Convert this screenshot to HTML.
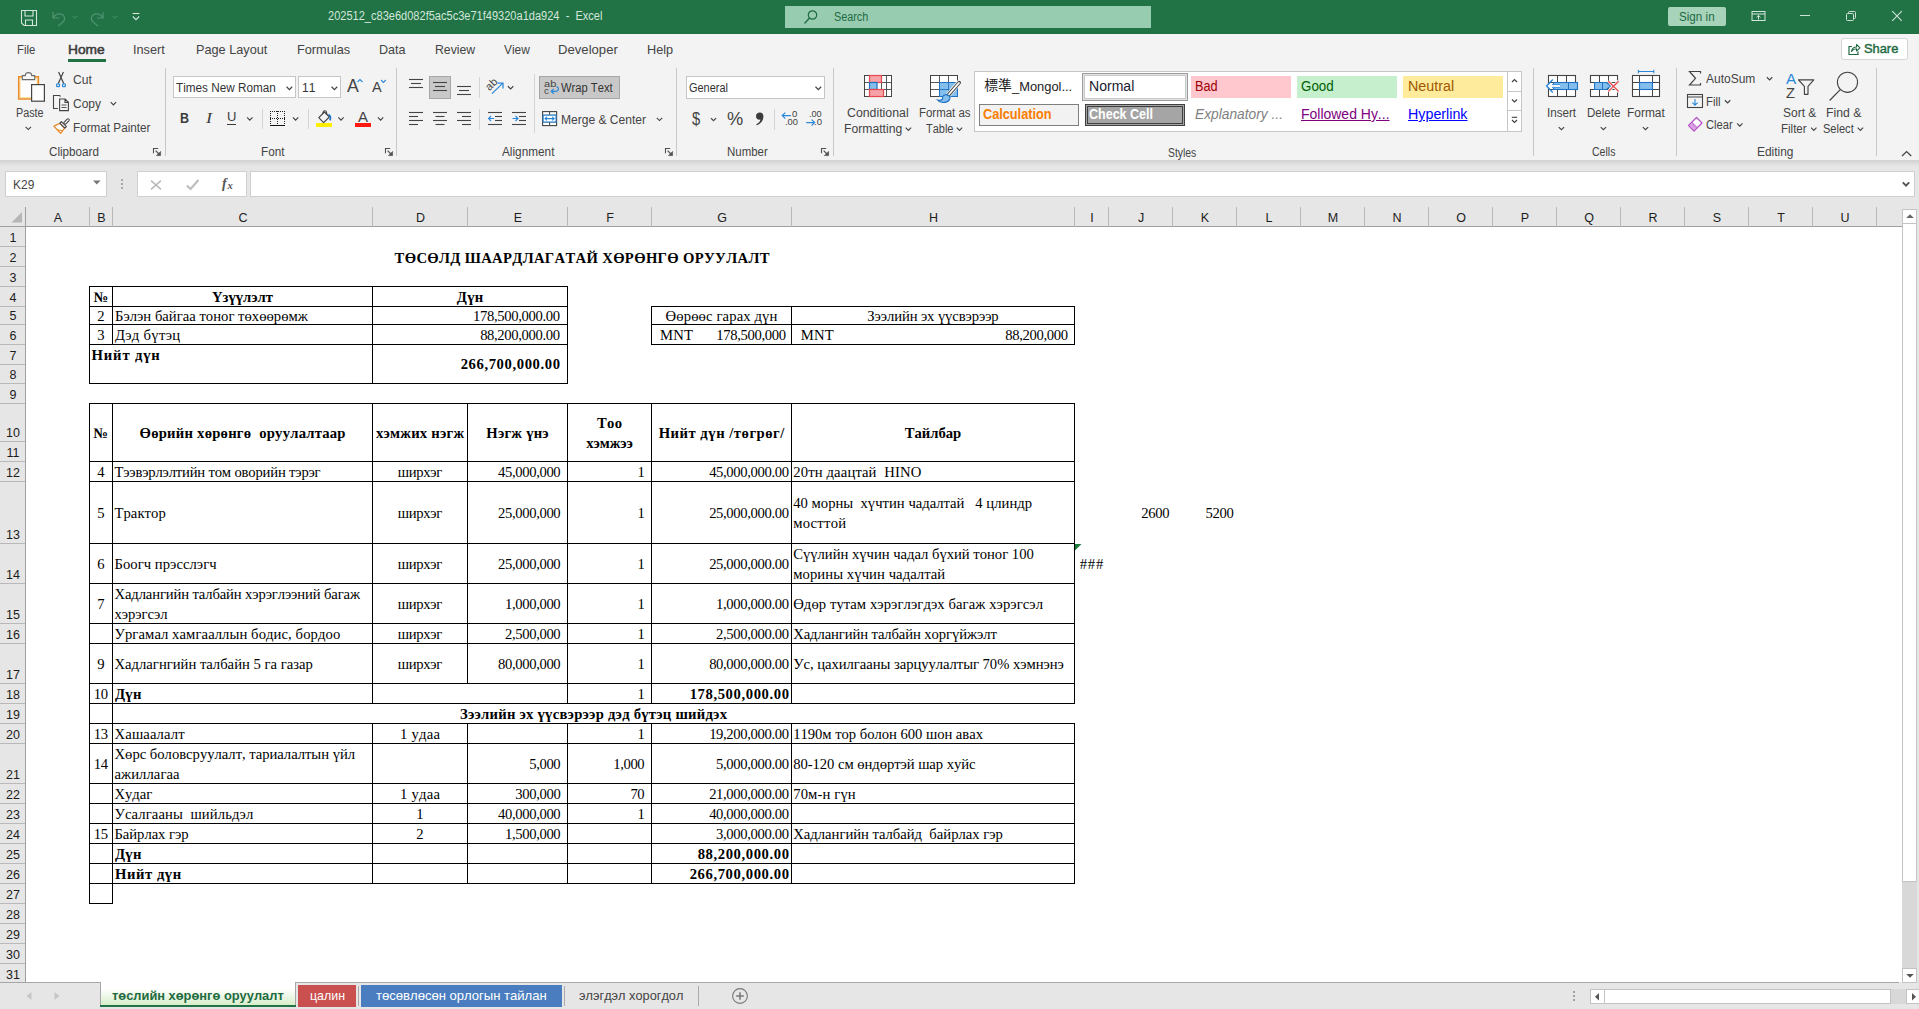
<!DOCTYPE html>
<html lang="mn"><head><meta charset="utf-8"><title>Excel</title>
<style>
html,body{margin:0;padding:0;background:#fff;}
body{width:1919px;height:1009px;overflow:hidden;}
#app{position:relative;width:1919px;height:1009px;overflow:hidden;background:#fff;font-family:"Liberation Sans",sans-serif;font-size:12px;color:#444;}
#app div,#app span,#app svg{position:absolute;box-sizing:border-box;}
#app .c{display:flex;font-kerning:none;font-family:"Liberation Serif",serif;font-size:14.67px;line-height:20px;color:#000;overflow:visible;}
#app .c span{position:static;display:block;}
#app .b{pointer-events:none;}
#app .t{white-space:pre;line-height:1;}
#app .ch{font-family:"Liberation Sans",sans-serif;font-size:12.5px;color:#1c1c1c;text-align:center;line-height:20px;white-space:pre;}
#app .rh{font-family:"Liberation Sans",sans-serif;font-size:12.5px;color:#1c1c1c;text-align:center;line-height:20px;white-space:pre;}

</style></head>
<body>
<div id="app">
<div style="left:0px;top:0px;width:1919px;height:34px;background:#217346;"></div>
<svg style="left:20px;top:9px;" width="18" height="18" viewBox="0 0 18 18"><path d="M1.5 1.5 H16.5 V16.5 H4 L1.5 14 Z M5 1.5 V7 H13 V1.5 M5.5 16.5 V11 H12.5 V16.5" fill="none" stroke="#d4e6dc" stroke-width="1.1"/></svg>
<svg style="left:50px;top:9px;" width="18" height="18" viewBox="0 0 18 18"><path d="M3 3 V9 H9 M3 9 C6 3.5 13 3.5 14.5 8.5 C15.5 12 12 14 8 17" fill="none" stroke="#4f9370" stroke-width="1.2"/></svg>
<svg style="left:70px;top:12px;" width="10" height="10" viewBox="0 0 10 10"><path d="M2.5 3.75 L5 6.25 L7.5 3.75" fill="none" stroke="#4f9370" stroke-width="1"/></svg>
<svg style="left:88px;top:9px;" width="18" height="18" viewBox="0 0 18 18"><path d="M15 3 V9 H9 M15 9 C12 3.5 5 3.5 3.5 8.5 C2.5 12 6 14 10 17" fill="none" stroke="#4f9370" stroke-width="1.2"/></svg>
<svg style="left:109.5px;top:12px;" width="10" height="10" viewBox="0 0 10 10"><path d="M2.5 3.75 L5 6.25 L7.5 3.75" fill="none" stroke="#4f9370" stroke-width="1"/></svg>
<svg style="left:130px;top:11px;" width="12" height="12" viewBox="0 0 12 12"><path d="M2.5 2.5 H9.5" stroke="#d4e6dc" stroke-width="1.1"/><path d="M2.8 5.5 L6 8.7 L9.2 5.5" fill="none" stroke="#d4e6dc" stroke-width="1.1"/></svg>
<div class="t" style="top:5.70px;height:20px;line-height:20px;font-size:12px;color:#d3e6da;font-kerning:none;transform:scaleX(0.9202);transform-origin:0 50%;left:327.60px;">202512_c83e6d082f5ac5c3e71f49320a1da924  -  Excel</div>
<div style="left:785px;top:6px;width:366px;height:22px;background:#98ccb1;"></div>
<svg style="left:802.4px;top:8px;" width="18" height="18" viewBox="0 0 18 18"><circle cx="10.5" cy="7" r="4.2" fill="none" stroke="#1f6b43" stroke-width="1.2"/><path d="M7.5 10 L2.5 15.5" stroke="#1f6b43" stroke-width="1.3"/></svg>
<div class="t" style="top:6.80px;height:20px;line-height:20px;font-size:12.5px;color:#1f6b43;font-kerning:none;transform:scaleX(0.8662);transform-origin:0 50%;left:834.20px;">Search</div>
<div style="left:1668px;top:7px;width:58px;height:19px;background:#a6d3ba;border-radius:2px;"></div>
<div class="t" style="top:6.60px;height:20px;line-height:20px;font-size:12.5px;color:#1f6b43;font-kerning:none;transform:scaleX(0.9316);transform-origin:0 50%;left:1679.00px;">Sign in</div>
<svg style="left:1751px;top:10px;" width="16" height="12" viewBox="0 0 16 12"><rect x="1" y="1.5" width="13" height="9" fill="none" stroke="#d4e6dc" stroke-width="1"/><path d="M1 4 H14" stroke="#d4e6dc" stroke-width="1"/><path d="M7.5 9.5 V5.5 M5.5 7.3 L7.5 5.4 L9.5 7.3" fill="none" stroke="#d4e6dc" stroke-width="1"/></svg>
<div style="left:1800px;top:15px;width:10px;height:1px;background:#cfe3d8;"></div>
<svg style="left:1845px;top:10px;" width="12" height="12" viewBox="0 0 12 12"><rect x="1.5" y="3.5" width="7" height="7" fill="none" stroke="#cfe3d8" stroke-width="1" rx="1"/><path d="M3.5 3.5 V2.5 Q3.5 1.5 4.5 1.5 H9.5 Q10.5 1.5 10.5 2.5 V7.5 Q10.5 8.5 9.5 8.5 H8.5" fill="none" stroke="#cfe3d8" stroke-width="1"/></svg>
<svg style="left:1891px;top:10px;" width="12" height="12" viewBox="0 0 12 12"><path d="M1.2 1.2 L10.8 10.8 M10.8 1.2 L1.2 10.8" stroke="#cfe3d8" stroke-width="1.1"/></svg>
<div style="left:0px;top:34px;width:1919px;height:126px;background:#f3f3f3;"></div>
<div class="t" style="top:39.60px;height:20px;line-height:20px;font-size:13px;color:#444;font-kerning:none;transform:scaleX(0.8738);transform-origin:0 50%;left:17.30px;">File</div>
<div class="t" style="top:39.60px;height:20px;line-height:20px;font-size:13px;color:#3a3a3a;font-kerning:none;transform:scaleX(1.0585);transform-origin:0 50%;left:68.30px;-webkit-text-stroke:0.5px #3a3a3a;">Home</div>
<div style="left:68px;top:59px;width:38px;height:3px;background:#217346;"></div>
<div class="t" style="top:39.60px;height:20px;line-height:20px;font-size:13px;color:#444;font-kerning:none;transform:scaleX(0.9781);transform-origin:0 50%;left:133.20px;">Insert</div>
<div class="t" style="top:39.60px;height:20px;line-height:20px;font-size:13px;color:#444;font-kerning:none;transform:scaleX(0.9768);transform-origin:0 50%;left:196.00px;">Page Layout</div>
<div class="t" style="top:39.60px;height:20px;line-height:20px;font-size:13px;color:#444;font-kerning:none;transform:scaleX(0.9802);transform-origin:0 50%;left:297.20px;">Formulas</div>
<div class="t" style="top:39.60px;height:20px;line-height:20px;font-size:13px;color:#444;font-kerning:none;transform:scaleX(0.9688);transform-origin:0 50%;left:379.40px;">Data</div>
<div class="t" style="top:39.60px;height:20px;line-height:20px;font-size:13px;color:#444;font-kerning:none;transform:scaleX(0.9410);transform-origin:0 50%;left:435.20px;">Review</div>
<div class="t" style="top:39.60px;height:20px;line-height:20px;font-size:13px;color:#444;font-kerning:none;transform:scaleX(0.9160);transform-origin:0 50%;left:503.50px;">View</div>
<div class="t" style="top:39.60px;height:20px;line-height:20px;font-size:13px;color:#444;font-kerning:none;transform:scaleX(1.0094);transform-origin:0 50%;left:558.20px;">Developer</div>
<div class="t" style="top:39.60px;height:20px;line-height:20px;font-size:13px;color:#444;font-kerning:none;transform:scaleX(0.9765);transform-origin:0 50%;left:646.50px;">Help</div>
<div style="left:1841px;top:38px;width:67px;height:22px;background:#fff;border:1px solid #d6d6d6;border-radius:3px;"></div>
<svg style="left:1847px;top:42px;" width="14" height="14" viewBox="0 0 14 14"><path d="M5 4.5 H2 V12.5 H11 V9.5" fill="none" stroke="#1f6b43" stroke-width="1.2"/><path d="M4.5 9.5 C5 6.5 7 5 9.5 5 V2.5 L13 5.8 L9.5 9 V6.8 C7.5 6.8 6 7.5 4.5 9.5 Z" fill="none" stroke="#1f6b43" stroke-width="1.1" stroke-linejoin="round"/></svg>
<div class="t" style="top:39.20px;height:20px;line-height:20px;font-size:13px;color:#1f6b43;font-kerning:none;transform:scaleX(0.9889);transform-origin:0 50%;left:1864.00px;-webkit-text-stroke:0.45px #1f6b43;">Share</div>
<div style="left:0px;top:160px;width:1919px;height:849px;background:#e6e6e6;"></div>
<div style="left:0;top:160px;width:1919px;height:6px;background:linear-gradient(#d2d2d2,#e6e6e6);"></div>
<div style="left:5px;top:171px;width:102px;height:26px;background:#fff;border:1px solid #cfcfcf;"></div>
<div class="t" style="top:174.60px;height:20px;line-height:20px;font-size:12.5px;color:#444;font-kerning:none;transform:scaleX(0.9578);transform-origin:0 50%;left:12.70px;">K29</div>
<svg style="left:92px;top:179px;" width="10" height="8" viewBox="0 0 10 8"><path d="M1 1.5 H8.6 L4.8 5.6 Z" fill="#777"/></svg>
<div style="left:121px;top:179.3px;width:2px;height:2px;background:#a8a8a8;"></div>
<div style="left:121px;top:183px;width:2px;height:2px;background:#a8a8a8;"></div>
<div style="left:121px;top:186.7px;width:2px;height:2px;background:#a8a8a8;"></div>
<div style="left:137px;top:171px;width:110px;height:26px;background:#fff;border:1px solid #cfcfcf;"></div>
<svg style="left:149px;top:178px;" width="14" height="14" viewBox="0 0 14 14"><path d="M2 2.6 L12 11.4 M12 2.6 L2 11.4" stroke="#b9b9b9" stroke-width="1.5"/></svg>
<svg style="left:185px;top:178px;" width="15" height="14" viewBox="0 0 15 14"><path d="M1.8 7.5 L5.6 11 L13.4 2" fill="none" stroke="#bdbdbd" stroke-width="2.1"/></svg>
<div class="t" style="top:174.20px;height:20px;line-height:20px;font-size:14px;color:#555;font-kerning:none;font-family:'Liberation Serif',serif;font-style:italic;left:222.00px;font-weight:bold;">f</div>
<div class="t" style="top:176.00px;height:20px;line-height:20px;font-size:10.5px;color:#555;font-kerning:none;font-family:'Liberation Serif',serif;font-style:italic;left:227.50px;font-weight:bold;">x</div>
<div style="left:250px;top:171px;width:1665px;height:26px;background:#fff;border:1px solid #cfcfcf;"></div>
<svg style="left:1901.3px;top:178.6px;" width="10" height="10" viewBox="0 0 10 10"><path d="M1.7999999999999998 3.3 L5 6.7 L8.2 3.3" fill="none" stroke="#555" stroke-width="1.9"/></svg>
<div style="left:26px;top:227px;width:1876px;height:755px;background:#fff;"></div>
<div style="left:0px;top:226px;width:1902px;height:1px;background:#9f9f9f;"></div>
<div style="left:25px;top:207px;width:1px;height:775px;background:#9f9f9f;"></div>
<svg style="left:10px;top:211px;" width="13" height="13" viewBox="0 0 13 13"><path d="M12 1 V11.5 H1.5 Z" fill="#b6b6b6"/></svg>
<div style="left:89px;top:207px;width:1px;height:20px;background:#b9b9b9;"></div>
<div class="ch" style="left:26.5px;top:208px;width:63px;height:20px;">A</div>
<div style="left:112px;top:207px;width:1px;height:20px;background:#b9b9b9;"></div>
<div class="ch" style="left:90.5px;top:208px;width:22px;height:20px;">B</div>
<div style="left:372px;top:207px;width:1px;height:20px;background:#b9b9b9;"></div>
<div class="ch" style="left:113.5px;top:208px;width:259px;height:20px;">C</div>
<div style="left:467px;top:207px;width:1px;height:20px;background:#b9b9b9;"></div>
<div class="ch" style="left:373.5px;top:208px;width:94px;height:20px;">D</div>
<div style="left:567px;top:207px;width:1px;height:20px;background:#b9b9b9;"></div>
<div class="ch" style="left:468.5px;top:208px;width:99px;height:20px;">E</div>
<div style="left:651px;top:207px;width:1px;height:20px;background:#b9b9b9;"></div>
<div class="ch" style="left:568.5px;top:208px;width:83px;height:20px;">F</div>
<div style="left:791px;top:207px;width:1px;height:20px;background:#b9b9b9;"></div>
<div class="ch" style="left:652.5px;top:208px;width:139px;height:20px;">G</div>
<div style="left:1074px;top:207px;width:1px;height:20px;background:#b9b9b9;"></div>
<div class="ch" style="left:792.5px;top:208px;width:282px;height:20px;">H</div>
<div style="left:1108px;top:207px;width:1px;height:20px;background:#b9b9b9;"></div>
<div class="ch" style="left:1075.5px;top:208px;width:33px;height:20px;">I</div>
<div style="left:1172px;top:207px;width:1px;height:20px;background:#b9b9b9;"></div>
<div class="ch" style="left:1109.5px;top:208px;width:63px;height:20px;">J</div>
<div style="left:1236px;top:207px;width:1px;height:20px;background:#b9b9b9;"></div>
<div class="ch" style="left:1173.5px;top:208px;width:63px;height:20px;">K</div>
<div style="left:1300px;top:207px;width:1px;height:20px;background:#b9b9b9;"></div>
<div class="ch" style="left:1237.5px;top:208px;width:63px;height:20px;">L</div>
<div style="left:1364px;top:207px;width:1px;height:20px;background:#b9b9b9;"></div>
<div class="ch" style="left:1301.5px;top:208px;width:63px;height:20px;">M</div>
<div style="left:1428px;top:207px;width:1px;height:20px;background:#b9b9b9;"></div>
<div class="ch" style="left:1365.5px;top:208px;width:63px;height:20px;">N</div>
<div style="left:1492px;top:207px;width:1px;height:20px;background:#b9b9b9;"></div>
<div class="ch" style="left:1429.5px;top:208px;width:63px;height:20px;">O</div>
<div style="left:1556px;top:207px;width:1px;height:20px;background:#b9b9b9;"></div>
<div class="ch" style="left:1493.5px;top:208px;width:63px;height:20px;">P</div>
<div style="left:1620px;top:207px;width:1px;height:20px;background:#b9b9b9;"></div>
<div class="ch" style="left:1557.5px;top:208px;width:63px;height:20px;">Q</div>
<div style="left:1684px;top:207px;width:1px;height:20px;background:#b9b9b9;"></div>
<div class="ch" style="left:1621.5px;top:208px;width:63px;height:20px;">R</div>
<div style="left:1748px;top:207px;width:1px;height:20px;background:#b9b9b9;"></div>
<div class="ch" style="left:1685.5px;top:208px;width:63px;height:20px;">S</div>
<div style="left:1812px;top:207px;width:1px;height:20px;background:#b9b9b9;"></div>
<div class="ch" style="left:1749.5px;top:208px;width:63px;height:20px;">T</div>
<div style="left:1876px;top:207px;width:1px;height:20px;background:#b9b9b9;"></div>
<div class="ch" style="left:1813.5px;top:208px;width:63px;height:20px;">U</div>
<div style="left:0px;top:246px;width:25px;height:1px;background:#b9b9b9;"></div>
<div class="rh" style="left:0;top:228px;width:26px;height:20px;">1</div>
<div style="left:0px;top:266px;width:25px;height:1px;background:#b9b9b9;"></div>
<div class="rh" style="left:0;top:248px;width:26px;height:20px;">2</div>
<div style="left:0px;top:286px;width:25px;height:1px;background:#b9b9b9;"></div>
<div class="rh" style="left:0;top:268px;width:26px;height:20px;">3</div>
<div style="left:0px;top:306px;width:25px;height:1px;background:#b9b9b9;"></div>
<div class="rh" style="left:0;top:288px;width:26px;height:20px;">4</div>
<div style="left:0px;top:324px;width:25px;height:1px;background:#b9b9b9;"></div>
<div class="rh" style="left:0;top:306px;width:26px;height:20px;">5</div>
<div style="left:0px;top:344px;width:25px;height:1px;background:#b9b9b9;"></div>
<div class="rh" style="left:0;top:326px;width:26px;height:20px;">6</div>
<div style="left:0px;top:364px;width:25px;height:1px;background:#b9b9b9;"></div>
<div class="rh" style="left:0;top:346px;width:26px;height:20px;">7</div>
<div style="left:0px;top:383px;width:25px;height:1px;background:#b9b9b9;"></div>
<div class="rh" style="left:0;top:365px;width:26px;height:20px;">8</div>
<div style="left:0px;top:403px;width:25px;height:1px;background:#b9b9b9;"></div>
<div class="rh" style="left:0;top:385px;width:26px;height:20px;">9</div>
<div style="left:0px;top:441px;width:25px;height:1px;background:#b9b9b9;"></div>
<div class="rh" style="left:0;top:423px;width:26px;height:20px;">10</div>
<div style="left:0px;top:461px;width:25px;height:1px;background:#b9b9b9;"></div>
<div class="rh" style="left:0;top:443px;width:26px;height:20px;">11</div>
<div style="left:0px;top:481px;width:25px;height:1px;background:#b9b9b9;"></div>
<div class="rh" style="left:0;top:463px;width:26px;height:20px;">12</div>
<div style="left:0px;top:543px;width:25px;height:1px;background:#b9b9b9;"></div>
<div class="rh" style="left:0;top:525px;width:26px;height:20px;">13</div>
<div style="left:0px;top:583px;width:25px;height:1px;background:#b9b9b9;"></div>
<div class="rh" style="left:0;top:565px;width:26px;height:20px;">14</div>
<div style="left:0px;top:623px;width:25px;height:1px;background:#b9b9b9;"></div>
<div class="rh" style="left:0;top:605px;width:26px;height:20px;">15</div>
<div style="left:0px;top:643px;width:25px;height:1px;background:#b9b9b9;"></div>
<div class="rh" style="left:0;top:625px;width:26px;height:20px;">16</div>
<div style="left:0px;top:683px;width:25px;height:1px;background:#b9b9b9;"></div>
<div class="rh" style="left:0;top:665px;width:26px;height:20px;">17</div>
<div style="left:0px;top:703px;width:25px;height:1px;background:#b9b9b9;"></div>
<div class="rh" style="left:0;top:685px;width:26px;height:20px;">18</div>
<div style="left:0px;top:723px;width:25px;height:1px;background:#b9b9b9;"></div>
<div class="rh" style="left:0;top:705px;width:26px;height:20px;">19</div>
<div style="left:0px;top:743px;width:25px;height:1px;background:#b9b9b9;"></div>
<div class="rh" style="left:0;top:725px;width:26px;height:20px;">20</div>
<div style="left:0px;top:783px;width:25px;height:1px;background:#b9b9b9;"></div>
<div class="rh" style="left:0;top:765px;width:26px;height:20px;">21</div>
<div style="left:0px;top:803px;width:25px;height:1px;background:#b9b9b9;"></div>
<div class="rh" style="left:0;top:785px;width:26px;height:20px;">22</div>
<div style="left:0px;top:823px;width:25px;height:1px;background:#b9b9b9;"></div>
<div class="rh" style="left:0;top:805px;width:26px;height:20px;">23</div>
<div style="left:0px;top:843px;width:25px;height:1px;background:#b9b9b9;"></div>
<div class="rh" style="left:0;top:825px;width:26px;height:20px;">24</div>
<div style="left:0px;top:863px;width:25px;height:1px;background:#b9b9b9;"></div>
<div class="rh" style="left:0;top:845px;width:26px;height:20px;">25</div>
<div style="left:0px;top:883px;width:25px;height:1px;background:#b9b9b9;"></div>
<div class="rh" style="left:0;top:865px;width:26px;height:20px;">26</div>
<div style="left:0px;top:903px;width:25px;height:1px;background:#b9b9b9;"></div>
<div class="rh" style="left:0;top:885px;width:26px;height:20px;">27</div>
<div style="left:0px;top:923px;width:25px;height:1px;background:#b9b9b9;"></div>
<div class="rh" style="left:0;top:905px;width:26px;height:20px;">28</div>
<div style="left:0px;top:943px;width:25px;height:1px;background:#b9b9b9;"></div>
<div class="rh" style="left:0;top:925px;width:26px;height:20px;">29</div>
<div style="left:0px;top:963px;width:25px;height:1px;background:#b9b9b9;"></div>
<div class="rh" style="left:0;top:945px;width:26px;height:20px;">30</div>
<div class="rh" style="left:0;top:965px;width:26px;height:20px;">31</div>
<div style="left:1902px;top:207px;width:17px;height:775px;background:#e6e6e6;"></div>
<div style="left:1902px;top:223px;width:15px;height:659px;background:#fff;border:1px solid #c3c3c3;"></div>
<div style="left:1902px;top:882px;width:15px;height:86px;background:#d8d8d8;"></div>
<div style="left:1902px;top:209px;width:15px;height:15px;background:#fff;border:1px solid #c3c3c3;"></div>
<svg style="left:1904.5px;top:212px;" width="10" height="8" viewBox="0 0 10 8"><path d="M1.2 6 L5 2.2 L8.8 6 Z" fill="#666"/></svg>
<div style="left:0px;top:982px;width:1919px;height:27px;background:#e6e6e6;"></div>
<div style="left:0px;top:982px;width:1899px;height:1px;background:#a6a6a6;"></div>
<svg style="left:25px;top:991px;" width="8" height="10" viewBox="0 0 8 10"><path d="M6.5 1 L1.5 5 L6.5 9 Z" fill="#c6c6c6"/></svg>
<svg style="left:53px;top:991px;" width="8" height="10" viewBox="0 0 8 10"><path d="M1.5 1 L6.5 5 L1.5 9 Z" fill="#c6c6c6"/></svg>
<div style="left:100px;top:982px;width:196px;height:25px;background:linear-gradient(#ffffff 25%,#d3ecc4 100%);border-left:1px solid #a6a6a6;border-right:1px solid #a6a6a6;"></div>
<div style="left:100px;top:1005px;width:196px;height:2px;background:#217346;"></div>
<div class="t" style="top:985.60px;height:20px;line-height:20px;font-size:13px;color:#1e6b41;font-kerning:none;font-weight:bold;transform:scaleX(0.9891);transform-origin:0 50%;left:111.80px;">төслийн хөрөнгө оруулалт</div>
<div style="left:298px;top:985px;width:58px;height:22px;background:#c9504e;"></div>
<div class="t" style="top:985.60px;height:20px;line-height:20px;font-size:13px;color:#fff;font-kerning:none;transform:scaleX(0.9534);transform-origin:0 50%;left:309.60px;">цалин</div>
<div style="left:358px;top:986px;width:1px;height:20px;background:#ababab;"></div>
<div style="left:361px;top:985px;width:201px;height:22px;background:#4a7dc0;"></div>
<div class="t" style="top:985.60px;height:20px;line-height:20px;font-size:13px;color:#fff;font-kerning:none;transform:scaleX(1.0056);transform-origin:0 50%;left:375.80px;">төсөвлөсөн орлогын тайлан</div>
<div style="left:564px;top:986px;width:1px;height:20px;background:#ababab;"></div>
<div class="t" style="top:985.60px;height:20px;line-height:20px;font-size:13px;color:#444;font-kerning:none;transform:scaleX(0.9818);transform-origin:0 50%;left:579.40px;">элэгдэл хорогдол</div>
<div style="left:698px;top:986px;width:1px;height:20px;background:#ababab;"></div>
<svg style="left:731px;top:987px;" width="18" height="18" viewBox="0 0 18 18"><circle cx="9" cy="9" r="7.4" fill="none" stroke="#777" stroke-width="1.1"/><path d="M9 5.2 V12.8 M5.2 9 H12.8" stroke="#777" stroke-width="1.5"/></svg>
<div style="left:1573px;top:991px;width:1.6px;height:1.6px;background:#a0a0a0;"></div>
<div style="left:1573px;top:995px;width:1.6px;height:1.6px;background:#a0a0a0;"></div>
<div style="left:1573px;top:999px;width:1.6px;height:1.6px;background:#a0a0a0;"></div>
<div style="left:1590px;top:989px;width:15px;height:15px;background:#fff;border:1px solid #c3c3c3;"></div>
<svg style="left:1593px;top:992px;" width="8" height="10" viewBox="0 0 8 10"><path d="M6 1 L2 4.8 L6 8.6 Z" fill="#555"/></svg>
<div style="left:1604px;top:989px;width:287px;height:15px;background:#fff;border:1px solid #c3c3c3;"></div>
<div style="left:1906px;top:989px;width:15px;height:15px;background:#fff;border:1px solid #c3c3c3;"></div>
<svg style="left:1910px;top:992px;" width="8" height="10" viewBox="0 0 8 10"><path d="M2 1 L6 4.8 L2 8.6 Z" fill="#555"/></svg>
<div style="left:1891px;top:989px;width:15px;height:15px;background:#d8d8d8;"></div>
<div style="left:1902px;top:968px;width:15px;height:15px;background:#fff;border:1px solid #c3c3c3;"></div>
<svg style="left:1904.5px;top:972px;" width="10" height="8" viewBox="0 0 10 8"><path d="M1.2 2 L5 5.8 L8.8 2 Z" fill="#555"/></svg>
<div class="t" style="top:103.00px;height:20px;line-height:20px;font-size:12px;color:#444;font-kerning:none;transform:scaleX(0.8995);transform-origin:0 50%;left:15.60px;">Paste</div>
<div class="t" style="top:69.60px;height:20px;line-height:20px;font-size:12px;color:#444;font-kerning:none;transform:scaleX(1.0069);transform-origin:0 50%;left:72.50px;">Cut</div>
<div class="t" style="top:94.20px;height:20px;line-height:20px;font-size:12px;color:#444;font-kerning:none;transform:scaleX(0.9961);transform-origin:0 50%;left:72.50px;">Copy</div>
<div class="t" style="top:118.00px;height:20px;line-height:20px;font-size:12px;color:#444;font-kerning:none;transform:scaleX(0.9766);transform-origin:0 50%;left:72.50px;">Format Painter</div>
<div class="t" style="top:142.30px;height:20px;line-height:20px;font-size:12px;color:#444;font-kerning:none;transform:scaleX(0.9718);transform-origin:0 50%;left:48.70px;">Clipboard</div>
<div style="left:164.5px;top:68px;width:1px;height:88px;background:#c8c8c8;"></div>
<div style="left:173px;top:76px;width:123px;height:22px;background:#fff;border:1px solid #c6c6c6;"></div>
<div class="t" style="top:77.80px;height:20px;line-height:20px;font-size:12px;color:#333;font-kerning:none;transform:scaleX(0.9774);transform-origin:0 50%;left:176.30px;">Times New Roman</div>
<div style="left:298px;top:76px;width:43px;height:22px;background:#fff;border:1px solid #c6c6c6;"></div>
<div class="t" style="top:77.80px;height:20px;line-height:20px;font-size:12px;color:#333;font-kerning:none;transform:scaleX(0.9977);transform-origin:0 50%;left:302.00px;">11</div>
<div class="t" style="top:76.20px;height:20px;line-height:20px;font-size:17.5px;color:#444;font-kerning:none;transform:scaleX(1.0109);transform-origin:0 50%;left:346.80px;">A</div>
<div class="t" style="top:77.30px;height:20px;line-height:20px;font-size:14.5px;color:#444;font-kerning:none;transform:scaleX(1.0029);transform-origin:0 50%;left:372.30px;">A</div>
<div class="t" style="top:107.60px;height:20px;line-height:20px;font-size:14px;color:#3b3b3b;font-kerning:none;font-weight:bold;transform:scaleX(0.8904);transform-origin:0 50%;left:180.30px;">B</div>
<div class="t" style="top:107.60px;height:20px;line-height:20px;font-size:14.5px;color:#3b3b3b;font-kerning:none;font-family:'Liberation Serif',serif;font-style:italic;transform:scaleX(1.2426);transform-origin:0 50%;left:205.50px;">I</div>
<div class="t" style="top:107.40px;height:20px;line-height:20px;font-size:13.5px;color:#3b3b3b;font-kerning:none;transform:scaleX(0.9644);transform-origin:0 50%;left:227.00px;">U</div>
<div style="left:227px;top:123.6px;width:9.4px;height:1.1px;background:#3b3b3b;"></div>
<div style="left:262px;top:109px;width:1px;height:20px;background:#d4d4d4;"></div>
<div style="left:308px;top:109px;width:1px;height:20px;background:#d4d4d4;"></div>
<div style="left:316px;top:123px;width:16px;height:4px;background:#ffee00;"></div>
<div class="t" style="top:106.90px;height:20px;line-height:20px;font-size:14.7px;color:#444;font-kerning:none;transform:scaleX(1.0199);transform-origin:0 50%;left:358.40px;">A</div>
<div style="left:355px;top:123px;width:16px;height:4px;background:#ff1a10;"></div>
<div class="t" style="top:142.30px;height:20px;line-height:20px;font-size:12px;color:#444;font-kerning:none;transform:scaleX(0.9745);transform-origin:0 50%;left:260.60px;">Font</div>
<div style="left:396px;top:68px;width:1px;height:88px;background:#c8c8c8;"></div>
<div style="left:429px;top:76px;width:22px;height:22.5px;background:#c8c8c8;border:1px solid #a6a6a6;"></div>
<div style="left:479px;top:77px;width:1px;height:21px;background:#d4d4d4;"></div>
<div class="t" style="top:74.00px;height:20px;line-height:20px;font-size:11px;color:#444;font-kerning:none;left:485.20px;transform:rotate(-45deg);transform-origin:6.1px 50%;">ab</div>
<div style="left:534px;top:74px;width:1px;height:59px;background:#d4d4d4;"></div>
<div style="left:539px;top:76px;width:81px;height:22.5px;background:#c8c8c8;border:1px solid #a6a6a6;"></div>
<div class="t" style="top:73.60px;height:20px;line-height:20px;font-size:8.8px;color:#444;font-kerning:none;transform:scaleX(1.2569);transform-origin:0 50%;left:544.30px;">ab</div>
<div class="t" style="top:81.00px;height:20px;line-height:20px;font-size:8.8px;color:#444;font-kerning:none;transform:scaleX(1.1136);transform-origin:0 50%;left:544.30px;">c</div>
<div class="t" style="top:77.80px;height:20px;line-height:20px;font-size:12px;color:#333;font-kerning:none;transform:scaleX(0.9328);transform-origin:0 50%;left:561.20px;">Wrap Text</div>
<div style="left:479px;top:109px;width:1px;height:21px;background:#d4d4d4;"></div>
<div class="t" style="top:109.60px;height:20px;line-height:20px;font-size:12px;color:#444;font-kerning:none;transform:scaleX(1.0036);transform-origin:0 50%;left:561.20px;">Merge &amp; Center</div>
<div class="t" style="top:142.30px;height:20px;line-height:20px;font-size:12px;color:#444;font-kerning:none;transform:scaleX(0.9822);transform-origin:0 50%;left:502.30px;">Alignment</div>
<div style="left:676px;top:68px;width:1px;height:88px;background:#c8c8c8;"></div>
<div style="left:685.5px;top:76px;width:139.5px;height:22.5px;background:#fff;border:1px solid #c6c6c6;"></div>
<div class="t" style="top:77.80px;height:20px;line-height:20px;font-size:12px;color:#333;font-kerning:none;transform:scaleX(0.9113);transform-origin:0 50%;left:688.80px;">General</div>
<div class="t" style="top:108.90px;height:20px;line-height:20px;font-size:17.5px;color:#444;font-kerning:none;transform:scaleX(0.8428);transform-origin:0 50%;left:691.60px;">$</div>
<div class="t" style="top:108.90px;height:20px;line-height:20px;font-size:18.5px;color:#444;font-kerning:none;transform:scaleX(0.9850);transform-origin:0 50%;left:727.00px;">%</div>
<div style="left:774px;top:109px;width:1px;height:21px;background:#d4d4d4;"></div>
<div class="t" style="top:105.20px;height:20px;line-height:20px;font-size:8.2px;color:#444;font-kerning:none;transform:scaleX(1.1625);transform-origin:0 50%;left:792.30px;">0</div>
<div class="t" style="top:113.30px;height:20px;line-height:20px;font-size:8.2px;color:#444;font-kerning:none;transform:scaleX(1.1406);transform-origin:0 50%;left:784.60px;">.00</div>
<div class="t" style="top:105.20px;height:20px;line-height:20px;font-size:8.2px;color:#444;font-kerning:none;transform:scaleX(1.1142);transform-origin:0 50%;left:808.90px;">.00</div>
<div class="t" style="top:113.30px;height:20px;line-height:20px;font-size:8.2px;color:#444;font-kerning:none;transform:scaleX(1.1698);transform-origin:0 50%;left:813.60px;">.0</div>
<div class="t" style="top:142.30px;height:20px;line-height:20px;font-size:12px;color:#444;font-kerning:none;transform:scaleX(0.9538);transform-origin:0 50%;left:726.60px;">Number</div>
<div style="left:832.5px;top:68px;width:1px;height:88px;background:#c8c8c8;"></div>
<div class="t" style="top:103.00px;height:20px;line-height:20px;font-size:12px;color:#444;font-kerning:none;transform:scaleX(1.0263);transform-origin:0 50%;left:847.40px;">Conditional</div>
<div class="t" style="top:118.80px;height:20px;line-height:20px;font-size:12px;color:#444;font-kerning:none;transform:scaleX(1.0149);transform-origin:0 50%;left:843.50px;">Formatting</div>
<div class="t" style="top:103.00px;height:20px;line-height:20px;font-size:12px;color:#444;font-kerning:none;transform:scaleX(0.9535);transform-origin:0 50%;left:918.50px;">Format as</div>
<div class="t" style="top:118.80px;height:20px;line-height:20px;font-size:12px;color:#444;font-kerning:none;transform:scaleX(0.9136);transform-origin:0 50%;left:925.90px;">Table</div>
<div style="left:974px;top:70.5px;width:548px;height:61px;background:#fff;border:1px solid #c6c6c6;"></div>
<div class="t" style="top:75.90px;height:20px;line-height:20px;font-size:13.8px;color:#222;font-kerning:none;left:984.20px;font-family:'Liberation Sans','Noto Sans CJK JP',sans-serif;">標準</div>
<div class="t" style="top:76.50px;height:20px;line-height:20px;font-size:13.5px;color:#222;font-kerning:none;transform:scaleX(0.9551);transform-origin:0 50%;left:1012.00px;">_Mongol...</div>
<div style="left:1082px;top:73px;width:106px;height:28px;background:#fff;border:1px solid #9c9c9c;box-shadow:inset 0 0 0 1px #e2e2e2,inset 0 0 0 2px #c9c9c9;"></div>
<div class="t" style="top:76.10px;height:20px;line-height:20px;font-size:14px;color:#1a1a2e;font-kerning:none;transform:scaleX(1.0043);transform-origin:0 50%;left:1089.00px;">Normal</div>
<div style="left:1191px;top:76px;width:100px;height:22px;background:#ffc7ce;"></div>
<div class="t" style="top:76.10px;height:20px;line-height:20px;font-size:14px;color:#9c0006;font-kerning:none;transform:scaleX(0.9074);transform-origin:0 50%;left:1195.00px;">Bad</div>
<div style="left:1297px;top:76px;width:100px;height:22px;background:#c6efce;"></div>
<div class="t" style="top:76.10px;height:20px;line-height:20px;font-size:14px;color:#006100;font-kerning:none;transform:scaleX(0.9549);transform-origin:0 50%;left:1301.30px;">Good</div>
<div style="left:1403px;top:76px;width:100px;height:22px;background:#ffeb9c;"></div>
<div class="t" style="top:76.10px;height:20px;line-height:20px;font-size:14px;color:#9c5700;font-kerning:none;transform:scaleX(1.0217);transform-origin:0 50%;left:1407.50px;">Neutral</div>
<div style="left:979px;top:104px;width:100px;height:21.5px;background:#f2f2f2;border:1px solid #7f7f7f;"></div>
<div class="t" style="top:104.00px;height:20px;line-height:20px;font-size:14px;color:#fa7d00;font-kerning:none;font-weight:bold;transform:scaleX(0.9078);transform-origin:0 50%;left:983.00px;">Calculation</div>
<div style="left:1085px;top:104px;width:100px;height:21.5px;background:#a5a5a5;border:1px solid #3f3f3f;box-shadow:inset 0 0 0 1px #a5a5a5,inset 0 0 0 2px #3f3f3f;"></div>
<div class="t" style="top:104.00px;height:20px;line-height:20px;font-size:14px;color:#fff;font-kerning:none;font-weight:bold;transform:scaleX(0.8941);transform-origin:0 50%;left:1089.00px;">Check Cell</div>
<div class="t" style="top:104.00px;height:20px;line-height:20px;font-size:14px;color:#7f7f7f;font-kerning:none;font-style:italic;transform:scaleX(0.9834);transform-origin:0 50%;left:1195.00px;">Explanatory ...</div>
<div class="t" style="top:104.00px;height:20px;line-height:20px;font-size:14px;color:#800080;font-kerning:none;transform:scaleX(0.9980);transform-origin:0 50%;left:1301.30px;text-decoration:underline;">Followed Hy...</div>
<div class="t" style="top:104.00px;height:20px;line-height:20px;font-size:14px;color:#0000ff;font-kerning:none;transform:scaleX(1.0199);transform-origin:0 50%;left:1407.50px;text-decoration:underline;">Hyperlink</div>
<div style="left:1507px;top:70.5px;width:15px;height:21px;background:#fff;border:1px solid #c6c6c6;"></div>
<div style="left:1507px;top:90.5px;width:15px;height:20.5px;background:#fff;border:1px solid #c6c6c6;"></div>
<div style="left:1507px;top:110px;width:15px;height:21.5px;background:#fff;border:1px solid #c6c6c6;"></div>
<div class="t" style="top:142.50px;height:20px;line-height:20px;font-size:12px;color:#444;font-kerning:none;transform:scaleX(0.8661);transform-origin:0 50%;left:1168.30px;">Styles</div>
<div style="left:1532.5px;top:68px;width:1px;height:88px;background:#c8c8c8;"></div>
<div class="t" style="top:103.00px;height:20px;line-height:20px;font-size:12px;color:#444;font-kerning:none;transform:scaleX(0.9696);transform-origin:0 50%;left:1547.40px;">Insert</div>
<div class="t" style="top:103.00px;height:20px;line-height:20px;font-size:12px;color:#444;font-kerning:none;transform:scaleX(0.9602);transform-origin:0 50%;left:1587.20px;">Delete</div>
<div class="t" style="top:103.00px;height:20px;line-height:20px;font-size:12px;color:#444;font-kerning:none;transform:scaleX(0.9946);transform-origin:0 50%;left:1627.20px;">Format</div>
<div class="t" style="top:142.30px;height:20px;line-height:20px;font-size:12px;color:#444;font-kerning:none;transform:scaleX(0.8776);transform-origin:0 50%;left:1592.40px;">Cells</div>
<div style="left:1675.5px;top:68px;width:1px;height:88px;background:#c8c8c8;"></div>
<div class="t" style="top:69.20px;height:20px;line-height:20px;font-size:12px;color:#444;font-kerning:none;transform:scaleX(0.9989);transform-origin:0 50%;left:1706.40px;">AutoSum</div>
<div class="t" style="top:91.60px;height:20px;line-height:20px;font-size:12px;color:#444;font-kerning:none;transform:scaleX(0.9528);transform-origin:0 50%;left:1706.40px;">Fill</div>
<div class="t" style="top:114.80px;height:20px;line-height:20px;font-size:12px;color:#444;font-kerning:none;transform:scaleX(0.9279);transform-origin:0 50%;left:1706.40px;">Clear</div>
<div class="t" style="top:68.80px;height:20px;line-height:20px;font-size:15.4px;color:#2b88d8;font-kerning:none;transform:scaleX(0.9930);transform-origin:0 50%;left:1785.90px;">A</div>
<div class="t" style="top:83.00px;height:20px;line-height:20px;font-size:15.4px;color:#444;font-kerning:none;transform:scaleX(0.9565);transform-origin:0 50%;left:1786.00px;">Z</div>
<div class="t" style="top:103.00px;height:20px;line-height:20px;font-size:12px;color:#444;font-kerning:none;transform:scaleX(0.9986);transform-origin:0 50%;left:1783.40px;">Sort &amp;</div>
<div class="t" style="top:118.80px;height:20px;line-height:20px;font-size:12px;color:#444;font-kerning:none;transform:scaleX(0.9601);transform-origin:0 50%;left:1781.40px;">Filter</div>
<div class="t" style="top:103.00px;height:20px;line-height:20px;font-size:12px;color:#444;font-kerning:none;transform:scaleX(1.0179);transform-origin:0 50%;left:1826.40px;">Find &amp;</div>
<div class="t" style="top:118.80px;height:20px;line-height:20px;font-size:12px;color:#444;font-kerning:none;transform:scaleX(0.9206);transform-origin:0 50%;left:1823.30px;">Select</div>
<div class="t" style="top:142.30px;height:20px;line-height:20px;font-size:12px;color:#444;font-kerning:none;transform:scaleX(0.9923);transform-origin:0 50%;left:1757.40px;">Editing</div>
<div style="left:1875.5px;top:68px;width:1px;height:88px;background:#c8c8c8;"></div>
<svg style="left:0;top:0;" width="1919" height="165" viewBox="0 0 1919 165"><path d="M19.4 77.4 H37.8 V98.6 H19.4 Z" fill="#fdfdfd" stroke="none" stroke-width="0" /><path d="M31 97.6 H20 V78 H22 M35 78 H37.2 V84" fill="none" stroke="#fbe0a0" stroke-width="1.4" /><path d="M31 99 H18.7 V76.7 H22 M35 76.7 H38.4 V84" fill="none" stroke="#ea8c2c" stroke-width="1.5" /><path d="M22.3 79.6 V75.6 H25.3 C25.3 71.6 31.7 71.6 31.7 75.6 H34.7 V79.6 Z" fill="#f8f8f8" stroke="#6a6a6a" stroke-width="1.1" /><rect x="31.6" y="84.6" width="12.8" height="16.6" fill="#fdfdfd" stroke="#444" stroke-width="1.2" /><path d="M25.6 126.85 L28.3 129.54999999999998 L31.0 126.85" fill="none" stroke="#444" stroke-width="1.15" /><path d="M58.6 72 L63.7 83.6 M63.4 72 L58.3 83.6" fill="none" stroke="#444" stroke-width="1.2" /><rect x="56.6" y="83.8" width="2.9" height="2.9" fill="none" stroke="#2b88d8" stroke-width="1.2" rx="0.9"/><rect x="62.5" y="83.8" width="2.9" height="2.9" fill="none" stroke="#2b88d8" stroke-width="1.2" rx="0.9"/><path d="M58 108.5 H53.5 V95.5 H59.5 L60.5 96.5" fill="none" stroke="#444" stroke-width="1.1" /><path d="M59.6 99 H65.2 L68.4 102.2 V110.6 H59.6 Z M65 99 V102.4 H68.4" fill="none" stroke="#444" stroke-width="1.1" /><path d="M61.5 105 H66.5 M61.5 107.5 H66.5" fill="none" stroke="#444" stroke-width="0.9" /><path d="M110.7 102.15 L113.4 104.85 L116.10000000000001 102.15" fill="none" stroke="#444" stroke-width="1.15" /><path d="M59.8 123.4 L64.6 128.2 L60.6 133.3 L54 126.2 Z" fill="#fff" stroke="#ea8c2c" stroke-width="1.3" stroke-linejoin="round"/><path d="M57.4 129.8 L62.4 130.6" fill="none" stroke="#ea8c2c" stroke-width="1" /><path d="M65 123 L68 120" fill="none" stroke="#444" stroke-width="3.4" stroke-linecap="round"/><path d="M65 123 L68 120" fill="none" stroke="#f8f8f8" stroke-width="1.3" stroke-linecap="round"/><path d="M61.4 121.6 L66.4 126.6 L64.8 128.2 L59.8 123.2 Z" fill="#f3f3f3" stroke="#444" stroke-width="1.1" stroke-linejoin="round"/><path d="M153.5 153.2 V148.5 H158.2" fill="none" stroke="#505050" stroke-width="1.1" /><path d="M155.6 150.6 L160 155" fill="none" stroke="#505050" stroke-width="1.2" /><path d="M160.6 151.4 V155.6 H156.4 Z" fill="#505050" stroke="#505050" stroke-width="0.6" /><path d="M286.59999999999997 86.75 L289.4 89.65 L292.2 86.75" fill="none" stroke="#444" stroke-width="1.2" /><path d="M331.59999999999997 86.75 L334.4 89.65 L337.2 86.75" fill="none" stroke="#444" stroke-width="1.2" /><path d="M357.5 82 L360 79.5 L362.5 82" fill="none" stroke="#2b88d8" stroke-width="1.1" /><path d="M381 80 L383.4 82.4 L385.8 80" fill="none" stroke="#2b88d8" stroke-width="1.1" /><path d="M247.10000000000002 117.45 L249.8 120.14999999999999 L252.5 117.45" fill="none" stroke="#444" stroke-width="1.15" /><path d="M270 125.6 H285.4" fill="none" stroke="#111" stroke-width="1.3" shape-rendering="crispEdges"/><path d="M270 111.5 h1 M270 118.5 h1 M272 111.5 h1 M272 118.5 h1 M274 111.5 h1 M274 118.5 h1 M276 111.5 h1 M276 118.5 h1 M278 111.5 h1 M278 118.5 h1 M280 111.5 h1 M280 118.5 h1 M282 111.5 h1 M282 118.5 h1 M284 111.5 h1 M284 118.5 h1 M270 111.5 h1 M277 111.5 h1 M284 111.5 h1 M270 113.5 h1 M277 113.5 h1 M284 113.5 h1 M270 115.5 h1 M277 115.5 h1 M284 115.5 h1 M270 117.5 h1 M277 117.5 h1 M284 117.5 h1 M270 119.5 h1 M277 119.5 h1 M284 119.5 h1 M270 121.5 h1 M277 121.5 h1 M284 121.5 h1 M270 123.5 h1 M277 123.5 h1 M284 123.5 h1 " fill="none" stroke="#222" stroke-width="1" shape-rendering="crispEdges"/><path d="M292.90000000000003 117.45 L295.6 120.14999999999999 L298.3 117.45" fill="none" stroke="#444" stroke-width="1.15" /><path d="M318.8 117.6 L324.4 112 L329.4 117 L323.6 122.6 Z" fill="none" stroke="#444" stroke-width="1.15" stroke-linejoin="round"/><path d="M322.9 113.6 L323.1 112.2 C323.3 110.2 326.5 110.2 326.5 112.4 L326.9 114.6" fill="none" stroke="#444" stroke-width="1.1" /><path d="M328.4 114.4 C330.6 115.4 331 118 329.9 120.4" fill="none" stroke="#1f72c4" stroke-width="1.7" /><path d="M338.3 117.45 L341 120.14999999999999 L343.7 117.45" fill="none" stroke="#444" stroke-width="1.15" /><path d="M377.90000000000003 117.45 L380.6 120.14999999999999 L383.3 117.45" fill="none" stroke="#444" stroke-width="1.15" /><path d="M385.5 153.2 V148.5 H390.2" fill="none" stroke="#505050" stroke-width="1.1" /><path d="M387.6 150.6 L392 155" fill="none" stroke="#505050" stroke-width="1.2" /><path d="M392.6 151.4 V155.6 H388.4 Z" fill="#505050" stroke="#505050" stroke-width="0.6" /><path d="M409.0 79.5 H423.0" fill="none" stroke="#444" stroke-width="1.1" /><path d="M411.0 83.5 H421.0" fill="none" stroke="#444" stroke-width="1.1" /><path d="M409.0 87.5 H423.0" fill="none" stroke="#444" stroke-width="1.1" /><path d="M433.0 82.5 H447.0" fill="none" stroke="#444" stroke-width="1.1" /><path d="M435.0 86.5 H445.0" fill="none" stroke="#444" stroke-width="1.1" /><path d="M433.0 90.5 H447.0" fill="none" stroke="#444" stroke-width="1.1" /><path d="M457.0 86.5 H471.0" fill="none" stroke="#444" stroke-width="1.1" /><path d="M459.0 90.5 H469.0" fill="none" stroke="#444" stroke-width="1.1" /><path d="M457.0 94.5 H471.0" fill="none" stroke="#444" stroke-width="1.1" /><path d="M492 93.6 L502.6 83.4 M497.4 83 H503 V88.6" fill="none" stroke="#2b88d8" stroke-width="1.25" /><path d="M507.90000000000003 86.25 L510.6 88.94999999999999 L513.3000000000001 86.25" fill="none" stroke="#444" stroke-width="1.15" /><path d="M556.6 86.6 C559.2 87.4 559.2 91.3 555.6 91.3 H551.4 M553.8 88.9 L551.2 91.3 L553.8 93.7" fill="none" stroke="#2b88d8" stroke-width="1.2" /><path d="M409 112.5 H423" fill="none" stroke="#444" stroke-width="1.1" /><path d="M409 116.5 H418" fill="none" stroke="#444" stroke-width="1.1" /><path d="M409 120.5 H423" fill="none" stroke="#444" stroke-width="1.1" /><path d="M409 124.5 H418" fill="none" stroke="#444" stroke-width="1.1" /><path d="M433.0 112.5 H447.0" fill="none" stroke="#444" stroke-width="1.1" /><path d="M435.5 116.5 H444.5" fill="none" stroke="#444" stroke-width="1.1" /><path d="M433.0 120.5 H447.0" fill="none" stroke="#444" stroke-width="1.1" /><path d="M435.5 124.5 H444.5" fill="none" stroke="#444" stroke-width="1.1" /><path d="M457 112.5 H471" fill="none" stroke="#444" stroke-width="1.1" /><path d="M462 116.5 H471" fill="none" stroke="#444" stroke-width="1.1" /><path d="M457 120.5 H471" fill="none" stroke="#444" stroke-width="1.1" /><path d="M462 124.5 H471" fill="none" stroke="#444" stroke-width="1.1" /><path d="M488 112.5 H502" fill="none" stroke="#444" stroke-width="1.1" /><path d="M488 124.5 H502" fill="none" stroke="#444" stroke-width="1.1" /><path d="M495 116.5 H502" fill="none" stroke="#444" stroke-width="1.1" /><path d="M495 120.5 H502" fill="none" stroke="#444" stroke-width="1.1" /><path d="M488.5 118.5 H494 M491 116 L488.5 118.5 L491 121" fill="none" stroke="#2b88d8" stroke-width="1.1" /><path d="M512 112.5 H526" fill="none" stroke="#444" stroke-width="1.1" /><path d="M512 124.5 H526" fill="none" stroke="#444" stroke-width="1.1" /><path d="M519 116.5 H526" fill="none" stroke="#444" stroke-width="1.1" /><path d="M519 120.5 H526" fill="none" stroke="#444" stroke-width="1.1" /><path d="M512.5 118.5 H518 M515.5 116 L518 118.5 L515.5 121" fill="none" stroke="#2b88d8" stroke-width="1.1" /><rect x="542.6" y="111.6" width="14" height="14" fill="#fff" stroke="#444" stroke-width="1.1" /><path d="M542.6 115.2 H556.6 M542.6 122 H556.6 M549.6 111.6 V115.2 M549.6 122 V125.6" fill="none" stroke="#444" stroke-width="1" /><rect x="543.2" y="115.2" width="12.8" height="6.8" fill="#fff" stroke="#2b88d8" stroke-width="1.1" /><path d="M545.2 118.6 H554 M547 116.8 L545 118.6 L547 120.4 M552.2 116.8 L554.2 118.6 L552.2 120.4" fill="none" stroke="#2b88d8" stroke-width="1.1" /><path d="M656.8 117.85000000000001 L659.5 120.55 L662.2 117.85000000000001" fill="none" stroke="#444" stroke-width="1.15" /><path d="M665.5 153.2 V148.5 H670.2" fill="none" stroke="#505050" stroke-width="1.1" /><path d="M667.6 150.6 L672 155" fill="none" stroke="#505050" stroke-width="1.2" /><path d="M672.6 151.4 V155.6 H668.4 Z" fill="#505050" stroke="#505050" stroke-width="0.6" /><path d="M815.5 86.75 L818.3 89.65 L821.0999999999999 86.75" fill="none" stroke="#444" stroke-width="1.2" /><path d="M710.9 118.10000000000001 L713.5 120.7 L716.1 118.10000000000001" fill="none" stroke="#444" stroke-width="1.15" /><path d="M763.4 116 C763.4 121 760.5 124 756.6 125.2 L756.2 124.4 C758.6 123.3 760.2 121.6 760.4 119.6 C758 120.2 756 118.6 756 116.2 C756 114 757.7 112.6 759.8 112.6 C762 112.6 763.4 114 763.4 116 Z" fill="#3b3b3b" stroke="none" stroke-width="0" /><path d="M782.3 115.6 H791 M785.3 112.6 L782.3 115.6 L785.3 118.6" fill="none" stroke="#2b88d8" stroke-width="1.2" /><path d="M806.2 122.6 H814.6 M811.6 119.6 L814.6 122.6 L811.6 125.6" fill="none" stroke="#2b88d8" stroke-width="1.2" /><path d="M821.5 153.2 V148.5 H826.2" fill="none" stroke="#505050" stroke-width="1.1" /><path d="M823.6 150.6 L828 155" fill="none" stroke="#505050" stroke-width="1.2" /><path d="M828.6 151.4 V155.6 H824.4 Z" fill="#505050" stroke="#505050" stroke-width="0.6" /><rect x="864.5" y="75.5" width="27" height="21" fill="#fff" stroke="#444" stroke-width="1" /><path d="M864.5 82.5 H891.5 M864.5 89.5 H891.5 M869.5 75.5 V96.5 M881.5 75.5 V96.5 M886.5 75.5 V96.5" fill="none" stroke="#444" stroke-width="0.9" /><rect x="869.5" y="75.5" width="12" height="7" fill="#f5a3a8" stroke="#e5484d" stroke-width="1.2" /><rect x="869.5" y="82.5" width="7.5" height="7" fill="#83beec" stroke="#1f72c4" stroke-width="1.2" /><rect x="869.5" y="89.5" width="14" height="7" fill="#f5a3a8" stroke="#e5484d" stroke-width="1.2" /><path d="M905.6999999999999 127.65 L908.4 130.35 L911.1 127.65" fill="none" stroke="#444" stroke-width="1.15" /><rect x="930.5" y="75.5" width="27" height="21" fill="#fff" stroke="#444" stroke-width="1" /><path d="M930.5 82.5 H957.5 M930.5 89.5 H957.5 M939.5 75.5 V96.5 M948.5 75.5 V96.5" fill="none" stroke="#444" stroke-width="0.9" /><rect x="939.5" y="82.5" width="18" height="14" fill="#83beec" stroke="#1f72c4" stroke-width="1" /><path d="M939.5 89.5 H957.5 M948.5 82.5 V96.5" fill="none" stroke="#1f72c4" stroke-width="0.9" /><path d="M959.6 82 L947.4 96" fill="none" stroke="#f3f3f3" stroke-width="5" /><path d="M959.2 82.6 L948.2 95.2" fill="none" stroke="#444" stroke-width="3.6" stroke-linecap="round"/><path d="M959 82.9 L948.6 94.8" fill="none" stroke="#fff" stroke-width="1.7" stroke-linecap="round"/><path d="M949.6 96.4 C946.6 93 941.6 95 942.6 99 C941 100.5 939 100.6 937.6 100 C940 103.2 947 103.6 949.5 99.6 C950.3 98.4 950.3 97.4 949.6 96.4 Z" fill="#83beec" stroke="#1f72c4" stroke-width="1.1" /><path d="M956.8 127.65 L959.5 130.35 L962.2 127.65" fill="none" stroke="#444" stroke-width="1.15" /><path d="M1512 82 L1514.5 79.5 L1517 82" fill="none" stroke="#444" stroke-width="1.2" /><path d="M1512 99.5 L1514.5 102 L1517 99.5" fill="none" stroke="#444" stroke-width="1.2" /><path d="M1511.8 117.3 H1517.2" fill="none" stroke="#444" stroke-width="1.1" /><path d="M1512 120 L1514.5 122.5 L1517 120" fill="none" stroke="#444" stroke-width="1.2" /><rect x="1548.5" y="75.5" width="27" height="21" fill="#fff" stroke="#444" stroke-width="1.1" /><path d="M1548.5 82.5 H1575.5 M1548.5 89.5 H1575.5 M1557.5 75.5 V96.5 M1566.5 75.5 V96.5 " fill="none" stroke="#444" stroke-width="1" /><rect x="1553.5" y="82.5" width="24" height="7" fill="#83beec" stroke="#1f72c4" stroke-width="1.1" /><path d="M1568.5 82.5 V89.5" fill="none" stroke="#1f72c4" stroke-width="1" /><path d="M1547.4 86 H1560" fill="none" stroke="#fff" stroke-width="3" /><path d="M1552 84.6 H1560 M1552 87.4 H1560" fill="none" stroke="#2b88d8" stroke-width="0.9" /><path d="M1552.8 79.6 L1546.6 86 L1552.8 92.4" fill="none" stroke="#2b88d8" stroke-width="1.4" /><path d="M1558.7 127.05000000000001 L1561.4 129.75 L1564.1000000000001 127.05000000000001" fill="none" stroke="#444" stroke-width="1.15" /><rect x="1590.5" y="75.5" width="27" height="21" fill="#fff" stroke="#444" stroke-width="1.1" /><path d="M1590.5 82.5 H1617.5 M1590.5 89.5 H1617.5 M1599.5 75.5 V96.5 M1608.5 75.5 V96.5 " fill="none" stroke="#444" stroke-width="1" /><path d="M1590.5 83 V89" fill="none" stroke="#f3f3f3" stroke-width="2.2" /><path d="M1617.5 83 V89" fill="none" stroke="#f3f3f3" stroke-width="2.2" /><path d="M1594.5 82.5 H1606.5 L1610.6 86 L1606.5 89.5 H1594.5 Z" fill="#83beec" stroke="#1f72c4" stroke-width="1.1" /><path d="M1602.5 82.5 V89.5" fill="none" stroke="#1f72c4" stroke-width="1" /><path d="M1608.2 81 L1618.8 91.6 M1618.8 81 L1608.2 91.6" fill="none" stroke="#f3f3f3" stroke-width="3" /><path d="M1608.4 81.2 L1618.6 91.4 M1618.6 81.2 L1608.4 91.4" fill="none" stroke="#e8484a" stroke-width="1.3" /><path d="M1600.7 127.05000000000001 L1603.4 129.75 L1606.1000000000001 127.05000000000001" fill="none" stroke="#444" stroke-width="1.15" /><rect x="1632.5" y="75.5" width="27" height="21" fill="#fff" stroke="#444" stroke-width="1.1" /><path d="M1632.5 82.5 H1659.5 M1632.5 89.5 H1659.5 M1639.5 75.5 V96.5 M1652.5 75.5 V96.5 " fill="none" stroke="#444" stroke-width="1" /><rect x="1639.5" y="82.5" width="13" height="7" fill="#83beec" stroke="#1f72c4" stroke-width="1.1" /><path d="M1638.4 71.5 H1653.8 M1638.4 69.8 V73.2 M1653.8 69.8 V73.2" fill="none" stroke="#2b88d8" stroke-width="1.1" /><path d="M1642.8 127.05000000000001 L1645.5 129.75 L1648.2 127.05000000000001" fill="none" stroke="#444" stroke-width="1.15" /><path d="M1700.5 73.5 V71.5 H1689.5 L1695.5 78.3 L1689.5 85 H1700.5 V83" fill="none" stroke="#444" stroke-width="1.2" stroke-linejoin="miter"/><path d="M1766.8999999999999 77.25 L1769.6 79.94999999999999 L1772.3 77.25" fill="none" stroke="#444" stroke-width="1.15" /><rect x="1687.5" y="94.5" width="15" height="13" fill="none" stroke="#444" stroke-width="1.1" /><path d="M1687.5 97 H1702.5" fill="none" stroke="#444" stroke-width="1" /><path d="M1695 99 V105 M1692.4 102.6 L1695 105.2 L1697.6 102.6" fill="none" stroke="#2b88d8" stroke-width="1.1" /><path d="M1724.8999999999999 100.25 L1727.6 102.94999999999999 L1730.3 100.25" fill="none" stroke="#444" stroke-width="1.15" /><path d="M1696.5 117.5 L1702 123 L1694 131 L1688.5 125.5 Z" fill="#fff" stroke="#b44fc4" stroke-width="1.2" stroke-linejoin="round"/><path d="M1691.8 122.2 L1697.3 127.7 L1694 131 L1688.5 125.5 Z" fill="#d99be2" stroke="#b44fc4" stroke-width="1" stroke-linejoin="round"/><path d="M1737.1 123.45 L1739.8 126.14999999999999 L1742.5 123.45" fill="none" stroke="#444" stroke-width="1.15" /><path d="M1798.5 79.8 H1813.8 L1808 86.4 V94.3 H1804.4 V86.4 Z" fill="none" stroke="#444" stroke-width="1.15" stroke-linejoin="round"/><path d="M1811.1 127.65 L1813.8 130.35 L1816.5 127.65" fill="none" stroke="#444" stroke-width="1.15" /><circle cx="1847.5" cy="82.3" r="10.1" fill="none" stroke="#444" stroke-width="1.1"/><path d="M1840.3 89.6 L1829.6 100.5" fill="none" stroke="#444" stroke-width="1.2" /><path d="M1857.7 127.65 L1860.4 130.35 L1863.1000000000001 127.65" fill="none" stroke="#444" stroke-width="1.15" /><path d="M1902 156 L1906.6 151.6 L1911.2 156" fill="none" stroke="#444" stroke-width="1.3" /></svg>
<div class="c" style="left:90px;top:248.5px;width:984px;height:19px;justify-content:center;align-items:flex-end;text-align:center;padding:0px 2px 0px 2px;font-weight:bold;white-space:pre;"><span style="letter-spacing:0.334px;margin-right:-0.167px;margin-left:0.167px;">ТӨСӨЛД ШААРДЛАГАТАЙ ХӨРӨНГӨ ОРУУЛАЛТ</span></div>
<div class="b" style="left:89px;top:286px;width:24px;height:21px;border-left:1px solid #000;border-top:1px solid #000;border-right:1px solid #000;border-bottom:1px solid #000;"></div>
<div class="b" style="left:112px;top:286px;width:261px;height:21px;border-left:1px solid #000;border-top:1px solid #000;border-right:1px solid #000;border-bottom:1px solid #000;"></div>
<div class="b" style="left:372px;top:286px;width:196px;height:21px;border-left:1px solid #000;border-top:1px solid #000;border-right:1px solid #000;border-bottom:1px solid #000;"></div>
<div class="b" style="left:89px;top:306px;width:24px;height:19px;border-left:1px solid #000;border-top:1px solid #000;border-right:1px solid #000;border-bottom:1px solid #000;"></div>
<div class="b" style="left:112px;top:306px;width:261px;height:19px;border-left:1px solid #000;border-top:1px solid #000;border-right:1px solid #000;border-bottom:1px solid #000;"></div>
<div class="b" style="left:372px;top:306px;width:196px;height:19px;border-left:1px solid #000;border-top:1px solid #000;border-right:1px solid #000;border-bottom:1px solid #000;"></div>
<div class="b" style="left:89px;top:324px;width:24px;height:21px;border-left:1px solid #000;border-top:1px solid #000;border-right:1px solid #000;border-bottom:1px solid #000;"></div>
<div class="b" style="left:112px;top:324px;width:261px;height:21px;border-left:1px solid #000;border-top:1px solid #000;border-right:1px solid #000;border-bottom:1px solid #000;"></div>
<div class="b" style="left:372px;top:324px;width:196px;height:21px;border-left:1px solid #000;border-top:1px solid #000;border-right:1px solid #000;border-bottom:1px solid #000;"></div>
<div class="b" style="left:89px;top:344px;width:284px;height:40px;border-left:1px solid #000;border-top:1px solid #000;border-right:1px solid #000;border-bottom:1px solid #000;"></div>
<div class="b" style="left:372px;top:344px;width:196px;height:40px;border-left:1px solid #000;border-top:1px solid #000;border-right:1px solid #000;border-bottom:1px solid #000;"></div>
<div class="c" style="left:90px;top:287.5px;width:22px;height:19px;justify-content:center;align-items:center;text-align:center;padding:0px 2px 0px 2px;font-weight:bold;white-space:pre;"><span style="letter-spacing:1.357px;margin-right:-0.678px;margin-left:0.678px;">№</span></div>
<div class="c" style="left:113px;top:287.5px;width:259px;height:19px;justify-content:center;align-items:center;text-align:center;padding:0px 2px 0px 2px;font-weight:bold;white-space:pre;"><span style="letter-spacing:-0.019px;margin-right:0.010px;margin-left:-0.010px;">Үзүүлэлт</span></div>
<div class="c" style="left:373px;top:287.5px;width:194px;height:19px;justify-content:center;align-items:center;text-align:center;padding:0px 2px 0px 2px;font-weight:bold;white-space:pre;"><span style="letter-spacing:0.374px;margin-right:-0.187px;margin-left:0.187px;">Дүн</span></div>
<div class="c" style="left:90px;top:307.5px;width:22px;height:17px;justify-content:center;align-items:center;text-align:center;padding:0px 2px 0px 2px;white-space:pre;"><span style="letter-spacing:-0.335px;margin-right:0.167px;margin-left:-0.167px;">2</span></div>
<div class="c" style="left:113px;top:307.5px;width:259px;height:17px;justify-content:flex-start;align-items:center;text-align:left;padding:0px 2px 0px 2px;white-space:pre;"><span style="letter-spacing:0.010px;">Бэлэн байгаа тоног төхөөрөмж</span></div>
<div class="c" style="left:373px;top:307.5px;width:194px;height:17px;justify-content:flex-end;align-items:center;text-align:right;padding:0px 7px 0px 2px;white-space:pre;"><span style="letter-spacing:-0.363px;margin-right:0.363px;">178,500,000.00</span></div>
<div class="c" style="left:90px;top:325.5px;width:22px;height:19px;justify-content:center;align-items:center;text-align:center;padding:0px 2px 0px 2px;white-space:pre;"><span style="letter-spacing:-0.335px;margin-right:0.167px;margin-left:-0.167px;">3</span></div>
<div class="c" style="left:113px;top:325.5px;width:259px;height:19px;justify-content:flex-start;align-items:center;text-align:left;padding:0px 2px 0px 2px;white-space:pre;"><span style="letter-spacing:0.291px;">Дэд бүтэц</span></div>
<div class="c" style="left:373px;top:325.5px;width:194px;height:19px;justify-content:flex-end;align-items:center;text-align:right;padding:0px 7px 0px 2px;white-space:pre;"><span style="letter-spacing:-0.366px;margin-right:0.366px;">88,200,000.00</span></div>
<div class="c" style="left:90px;top:344.5px;width:282px;height:38px;justify-content:flex-start;align-items:flex-start;text-align:left;padding:0px 2px 0px 1.6px;font-weight:bold;white-space:pre;"><span style="letter-spacing:0.839px;">Нийт дүн</span></div>
<div class="c" style="left:373px;top:344.5px;width:194px;height:38px;justify-content:flex-end;align-items:center;text-align:right;padding:0px 7px 0px 2px;font-weight:bold;white-space:pre;"><span style="letter-spacing:0.594px;margin-right:-0.594px;">266,700,000.00</span></div>
<div class="b" style="left:651px;top:306px;width:141px;height:19px;border-left:1px solid #000;border-top:1px solid #000;border-right:1px solid #000;border-bottom:1px solid #000;"></div>
<div class="b" style="left:791px;top:306px;width:284px;height:19px;border-left:1px solid #000;border-top:1px solid #000;border-right:1px solid #000;border-bottom:1px solid #000;"></div>
<div class="b" style="left:651px;top:324px;width:141px;height:21px;border-left:1px solid #000;border-top:1px solid #000;border-right:1px solid #000;border-bottom:1px solid #000;"></div>
<div class="b" style="left:791px;top:324px;width:284px;height:21px;border-left:1px solid #000;border-top:1px solid #000;border-right:1px solid #000;border-bottom:1px solid #000;"></div>
<div class="c" style="left:652px;top:307.5px;width:139px;height:17px;justify-content:center;align-items:center;text-align:center;padding:0px 2px 0px 2px;white-space:pre;"><span style="letter-spacing:0.119px;margin-right:-0.060px;margin-left:0.060px;">Өөрөөс гарах дүн</span></div>
<div class="c" style="left:792px;top:307.5px;width:282px;height:17px;justify-content:center;align-items:center;text-align:center;padding:0px 2px 0px 2px;white-space:pre;"><span style="letter-spacing:-0.106px;margin-right:0.053px;margin-left:-0.053px;">Зээлийн эх үүсвэрээр</span></div>
<div class="c" style="left:652px;top:325.5px;width:139px;height:19px;justify-content:flex-start;align-items:center;text-align:left;padding:0px 2px 0px 8px;white-space:pre;"><span style="letter-spacing:0.234px;">MNT</span></div>
<div class="c" style="left:652px;top:325.5px;width:139px;height:19px;justify-content:flex-end;align-items:center;text-align:right;padding:0px 5px 0px 2px;white-space:pre;"><span style="letter-spacing:-0.359px;margin-right:0.359px;">178,500,000</span></div>
<div class="c" style="left:792px;top:325.5px;width:282px;height:19px;justify-content:flex-start;align-items:center;text-align:left;padding:0px 2px 0px 8.7px;white-space:pre;"><span style="letter-spacing:0.234px;">MNT</span></div>
<div class="c" style="left:792px;top:325.5px;width:282px;height:19px;justify-content:flex-end;align-items:center;text-align:right;padding:0px 6px 0px 2px;white-space:pre;"><span style="letter-spacing:-0.362px;margin-right:0.362px;">88,200,000</span></div>
<div class="b" style="left:89px;top:403px;width:24px;height:59px;border-left:1px solid #000;border-top:1px solid #000;border-right:1px solid #000;border-bottom:1px solid #000;"></div>
<div class="b" style="left:112px;top:403px;width:261px;height:59px;border-left:1px solid #000;border-top:1px solid #000;border-right:1px solid #000;border-bottom:1px solid #000;"></div>
<div class="b" style="left:372px;top:403px;width:96px;height:59px;border-left:1px solid #000;border-top:1px solid #000;border-right:1px solid #000;border-bottom:1px solid #000;"></div>
<div class="b" style="left:467px;top:403px;width:101px;height:59px;border-left:1px solid #000;border-top:1px solid #000;border-right:1px solid #000;border-bottom:1px solid #000;"></div>
<div class="b" style="left:567px;top:403px;width:85px;height:59px;border-left:1px solid #000;border-top:1px solid #000;border-right:1px solid #000;border-bottom:1px solid #000;"></div>
<div class="b" style="left:651px;top:403px;width:141px;height:59px;border-left:1px solid #000;border-top:1px solid #000;border-right:1px solid #000;border-bottom:1px solid #000;"></div>
<div class="b" style="left:791px;top:403px;width:284px;height:59px;border-left:1px solid #000;border-top:1px solid #000;border-right:1px solid #000;border-bottom:1px solid #000;"></div>
<div class="c" style="left:90px;top:404.5px;width:22px;height:57px;justify-content:center;align-items:center;text-align:center;padding:0px 2px 0px 2px;font-weight:bold;white-space:pre;"><span style="letter-spacing:1.557px;margin-right:-0.778px;margin-left:0.778px;">№</span></div>
<div class="c" style="left:113px;top:404.5px;width:259px;height:57px;justify-content:center;align-items:center;text-align:center;padding:0px 2px 0px 2px;font-weight:bold;white-space:pre;"><span style="letter-spacing:0.243px;margin-right:-0.121px;margin-left:0.121px;">Өөрийн хөрөнгө  оруулалтаар</span></div>
<div class="c" style="left:373px;top:404.5px;width:94px;height:57px;justify-content:center;align-items:center;text-align:center;padding:0px 2px 0px 2px;font-weight:bold;white-space:pre;"><span style="letter-spacing:0.234px;margin-right:-0.117px;margin-left:0.117px;">хэмжих нэгж</span></div>
<div class="c" style="left:468px;top:404.5px;width:99px;height:57px;justify-content:center;align-items:center;text-align:center;padding:0px 2px 0px 2px;font-weight:bold;white-space:pre;"><span style="letter-spacing:0.233px;margin-right:-0.116px;margin-left:0.116px;">Нэгж үнэ</span></div>
<div class="c" style="left:568px;top:404.5px;width:83px;height:57px;justify-content:center;align-items:center;text-align:center;padding:0px 2px 0px 2px;font-weight:bold;white-space:pre;"><span><span style="letter-spacing:0.385px;margin-right:-0.193px;margin-left:0.193px;">Тоо</span><span style="letter-spacing:-0.078px;margin-right:0.039px;margin-left:-0.039px;">хэмжээ</span></span></div>
<div class="c" style="left:652px;top:404.5px;width:139px;height:57px;justify-content:center;align-items:center;text-align:center;padding:0px 2px 0px 2px;font-weight:bold;white-space:pre;"><span style="letter-spacing:0.514px;margin-right:-0.257px;margin-left:0.257px;">Нийт дүн /төгрөг/</span></div>
<div class="c" style="left:792px;top:404.5px;width:282px;height:57px;justify-content:center;align-items:center;text-align:center;padding:0px 2px 0px 2px;font-weight:bold;white-space:pre;"><span style="letter-spacing:-0.017px;margin-right:0.009px;margin-left:-0.009px;">Тайлбар</span></div>
<div class="b" style="left:89px;top:461px;width:24px;height:21px;border-left:1px solid #000;border-top:1px solid #000;border-right:1px solid #000;border-bottom:1px solid #000;"></div>
<div class="b" style="left:112px;top:461px;width:261px;height:21px;border-left:1px solid #000;border-top:1px solid #000;border-right:1px solid #000;border-bottom:1px solid #000;"></div>
<div class="b" style="left:372px;top:461px;width:96px;height:21px;border-left:1px solid #000;border-top:1px solid #000;border-right:1px solid #000;border-bottom:1px solid #000;"></div>
<div class="b" style="left:467px;top:461px;width:101px;height:21px;border-left:1px solid #000;border-top:1px solid #000;border-right:1px solid #000;border-bottom:1px solid #000;"></div>
<div class="b" style="left:567px;top:461px;width:85px;height:21px;border-left:1px solid #000;border-top:1px solid #000;border-right:1px solid #000;border-bottom:1px solid #000;"></div>
<div class="b" style="left:651px;top:461px;width:141px;height:21px;border-left:1px solid #000;border-top:1px solid #000;border-right:1px solid #000;border-bottom:1px solid #000;"></div>
<div class="b" style="left:791px;top:461px;width:284px;height:21px;border-left:1px solid #000;border-top:1px solid #000;border-right:1px solid #000;border-bottom:1px solid #000;"></div>
<div class="c" style="left:90px;top:462.5px;width:22px;height:19px;justify-content:center;align-items:center;text-align:center;padding:0px 2px 0px 2px;white-space:pre;"><span style="letter-spacing:-0.335px;margin-right:0.167px;margin-left:-0.167px;">4</span></div>
<div class="c" style="left:113px;top:462.5px;width:259px;height:19px;justify-content:flex-start;align-items:center;text-align:left;padding:0px 2px 0px 1.5px;white-space:pre;"><span style="letter-spacing:-0.185px;">Тээвэрлэлтийн том оворийн тэрэг</span></div>
<div class="c" style="left:373px;top:462.5px;width:94px;height:19px;justify-content:center;align-items:center;text-align:center;padding:0px 2px 0px 2px;white-space:pre;"><span style="letter-spacing:-0.337px;margin-right:0.168px;margin-left:-0.168px;">ширхэг</span></div>
<div class="c" style="left:468px;top:462.5px;width:99px;height:19px;justify-content:flex-end;align-items:center;text-align:right;padding:0px 6.3px 0px 2px;white-space:pre;"><span style="letter-spacing:-0.362px;margin-right:0.362px;">45,000,000</span></div>
<div class="c" style="left:568px;top:462.5px;width:83px;height:19px;justify-content:flex-end;align-items:center;text-align:right;padding:0px 6.3px 0px 2px;white-space:pre;"><span style="letter-spacing:-0.335px;margin-right:0.335px;">1</span></div>
<div class="c" style="left:652px;top:462.5px;width:139px;height:19px;justify-content:flex-end;align-items:center;text-align:right;padding:0px 2px 0px 2px;white-space:pre;"><span style="letter-spacing:-0.366px;margin-right:0.366px;">45,000,000.00</span></div>
<div class="c" style="left:792px;top:462.5px;width:282px;height:19px;justify-content:flex-start;align-items:center;text-align:left;padding:0px 2px 0px 1.2px;white-space:pre;"><span style="letter-spacing:0.149px;">20тн даацтай  HINO</span></div>
<div class="b" style="left:89px;top:481px;width:24px;height:63px;border-left:1px solid #000;border-top:1px solid #000;border-right:1px solid #000;border-bottom:1px solid #000;"></div>
<div class="b" style="left:112px;top:481px;width:261px;height:63px;border-left:1px solid #000;border-top:1px solid #000;border-right:1px solid #000;border-bottom:1px solid #000;"></div>
<div class="b" style="left:372px;top:481px;width:96px;height:63px;border-left:1px solid #000;border-top:1px solid #000;border-right:1px solid #000;border-bottom:1px solid #000;"></div>
<div class="b" style="left:467px;top:481px;width:101px;height:63px;border-left:1px solid #000;border-top:1px solid #000;border-right:1px solid #000;border-bottom:1px solid #000;"></div>
<div class="b" style="left:567px;top:481px;width:85px;height:63px;border-left:1px solid #000;border-top:1px solid #000;border-right:1px solid #000;border-bottom:1px solid #000;"></div>
<div class="b" style="left:651px;top:481px;width:141px;height:63px;border-left:1px solid #000;border-top:1px solid #000;border-right:1px solid #000;border-bottom:1px solid #000;"></div>
<div class="b" style="left:791px;top:481px;width:284px;height:63px;border-left:1px solid #000;border-top:1px solid #000;border-right:1px solid #000;border-bottom:1px solid #000;"></div>
<div class="c" style="left:90px;top:482.5px;width:22px;height:61px;justify-content:center;align-items:center;text-align:center;padding:0px 2px 0px 2px;white-space:pre;"><span style="letter-spacing:-0.335px;margin-right:0.167px;margin-left:-0.167px;">5</span></div>
<div class="c" style="left:113px;top:482.5px;width:259px;height:61px;justify-content:flex-start;align-items:center;text-align:left;padding:0px 2px 0px 1.5px;white-space:pre;"><span style="letter-spacing:0.042px;">Трактор</span></div>
<div class="c" style="left:373px;top:482.5px;width:94px;height:61px;justify-content:center;align-items:center;text-align:center;padding:0px 2px 0px 2px;white-space:pre;"><span style="letter-spacing:-0.337px;margin-right:0.168px;margin-left:-0.168px;">ширхэг</span></div>
<div class="c" style="left:468px;top:482.5px;width:99px;height:61px;justify-content:flex-end;align-items:center;text-align:right;padding:0px 6.3px 0px 2px;white-space:pre;"><span style="letter-spacing:-0.362px;margin-right:0.362px;">25,000,000</span></div>
<div class="c" style="left:568px;top:482.5px;width:83px;height:61px;justify-content:flex-end;align-items:center;text-align:right;padding:0px 6.3px 0px 2px;white-space:pre;"><span style="letter-spacing:-0.335px;margin-right:0.335px;">1</span></div>
<div class="c" style="left:652px;top:482.5px;width:139px;height:61px;justify-content:flex-end;align-items:center;text-align:right;padding:0px 2px 0px 2px;white-space:pre;"><span style="letter-spacing:-0.366px;margin-right:0.366px;">25,000,000.00</span></div>
<div class="c" style="left:792px;top:482.5px;width:282px;height:61px;justify-content:flex-start;align-items:center;text-align:left;padding:0px 2px 0px 1.2px;white-space:pre;"><span><span style="letter-spacing:0.008px;">40 морны  хүчтин чадалтай   4 цлиндр</span><span style="letter-spacing:0.323px;">мосттой</span></span></div>
<div class="b" style="left:89px;top:543px;width:24px;height:41px;border-left:1px solid #000;border-top:1px solid #000;border-right:1px solid #000;border-bottom:1px solid #000;"></div>
<div class="b" style="left:112px;top:543px;width:261px;height:41px;border-left:1px solid #000;border-top:1px solid #000;border-right:1px solid #000;border-bottom:1px solid #000;"></div>
<div class="b" style="left:372px;top:543px;width:96px;height:41px;border-left:1px solid #000;border-top:1px solid #000;border-right:1px solid #000;border-bottom:1px solid #000;"></div>
<div class="b" style="left:467px;top:543px;width:101px;height:41px;border-left:1px solid #000;border-top:1px solid #000;border-right:1px solid #000;border-bottom:1px solid #000;"></div>
<div class="b" style="left:567px;top:543px;width:85px;height:41px;border-left:1px solid #000;border-top:1px solid #000;border-right:1px solid #000;border-bottom:1px solid #000;"></div>
<div class="b" style="left:651px;top:543px;width:141px;height:41px;border-left:1px solid #000;border-top:1px solid #000;border-right:1px solid #000;border-bottom:1px solid #000;"></div>
<div class="b" style="left:791px;top:543px;width:284px;height:41px;border-left:1px solid #000;border-top:1px solid #000;border-right:1px solid #000;border-bottom:1px solid #000;"></div>
<div class="c" style="left:90px;top:544.5px;width:22px;height:39px;justify-content:center;align-items:center;text-align:center;padding:0px 2px 0px 2px;white-space:pre;"><span style="letter-spacing:-0.335px;margin-right:0.167px;margin-left:-0.167px;">6</span></div>
<div class="c" style="left:113px;top:544.5px;width:259px;height:39px;justify-content:flex-start;align-items:center;text-align:left;padding:0px 2px 0px 1.5px;white-space:pre;"><span style="letter-spacing:0.035px;">Боогч прэсслэгч</span></div>
<div class="c" style="left:373px;top:544.5px;width:94px;height:39px;justify-content:center;align-items:center;text-align:center;padding:0px 2px 0px 2px;white-space:pre;"><span style="letter-spacing:-0.337px;margin-right:0.168px;margin-left:-0.168px;">ширхэг</span></div>
<div class="c" style="left:468px;top:544.5px;width:99px;height:39px;justify-content:flex-end;align-items:center;text-align:right;padding:0px 6.3px 0px 2px;white-space:pre;"><span style="letter-spacing:-0.362px;margin-right:0.362px;">25,000,000</span></div>
<div class="c" style="left:568px;top:544.5px;width:83px;height:39px;justify-content:flex-end;align-items:center;text-align:right;padding:0px 6.3px 0px 2px;white-space:pre;"><span style="letter-spacing:-0.335px;margin-right:0.335px;">1</span></div>
<div class="c" style="left:652px;top:544.5px;width:139px;height:39px;justify-content:flex-end;align-items:center;text-align:right;padding:0px 2px 0px 2px;white-space:pre;"><span style="letter-spacing:-0.366px;margin-right:0.366px;">25,000,000.00</span></div>
<div class="c" style="left:792px;top:544.5px;width:282px;height:39px;justify-content:flex-start;align-items:center;text-align:left;padding:0px 2px 0px 1.2px;white-space:pre;"><span><span style="letter-spacing:-0.017px;">Сүүлийн хүчин чадал бүхий тоног 100</span><span style="letter-spacing:0.073px;">морины хүчин чадалтай</span></span></div>
<div class="b" style="left:89px;top:583px;width:24px;height:41px;border-left:1px solid #000;border-top:1px solid #000;border-right:1px solid #000;border-bottom:1px solid #000;"></div>
<div class="b" style="left:112px;top:583px;width:261px;height:41px;border-left:1px solid #000;border-top:1px solid #000;border-right:1px solid #000;border-bottom:1px solid #000;"></div>
<div class="b" style="left:372px;top:583px;width:96px;height:41px;border-left:1px solid #000;border-top:1px solid #000;border-right:1px solid #000;border-bottom:1px solid #000;"></div>
<div class="b" style="left:467px;top:583px;width:101px;height:41px;border-left:1px solid #000;border-top:1px solid #000;border-right:1px solid #000;border-bottom:1px solid #000;"></div>
<div class="b" style="left:567px;top:583px;width:85px;height:41px;border-left:1px solid #000;border-top:1px solid #000;border-right:1px solid #000;border-bottom:1px solid #000;"></div>
<div class="b" style="left:651px;top:583px;width:141px;height:41px;border-left:1px solid #000;border-top:1px solid #000;border-right:1px solid #000;border-bottom:1px solid #000;"></div>
<div class="b" style="left:791px;top:583px;width:284px;height:41px;border-left:1px solid #000;border-top:1px solid #000;border-right:1px solid #000;border-bottom:1px solid #000;"></div>
<div class="c" style="left:90px;top:584.5px;width:22px;height:39px;justify-content:center;align-items:center;text-align:center;padding:0px 2px 0px 2px;white-space:pre;"><span style="letter-spacing:-0.335px;margin-right:0.167px;margin-left:-0.167px;">7</span></div>
<div class="c" style="left:113px;top:584.5px;width:259px;height:39px;justify-content:flex-start;align-items:center;text-align:left;padding:0px 2px 0px 1.5px;white-space:pre;"><span><span style="letter-spacing:-0.125px;">Хадлангийн талбайн хэрэглээний багаж</span><span style="letter-spacing:-0.038px;">хэрэгсэл</span></span></div>
<div class="c" style="left:373px;top:584.5px;width:94px;height:39px;justify-content:center;align-items:center;text-align:center;padding:0px 2px 0px 2px;white-space:pre;"><span style="letter-spacing:-0.337px;margin-right:0.168px;margin-left:-0.168px;">ширхэг</span></div>
<div class="c" style="left:468px;top:584.5px;width:99px;height:39px;justify-content:flex-end;align-items:center;text-align:right;padding:0px 6.3px 0px 2px;white-space:pre;"><span style="letter-spacing:-0.364px;margin-right:0.364px;">1,000,000</span></div>
<div class="c" style="left:568px;top:584.5px;width:83px;height:39px;justify-content:flex-end;align-items:center;text-align:right;padding:0px 6.3px 0px 2px;white-space:pre;"><span style="letter-spacing:-0.335px;margin-right:0.335px;">1</span></div>
<div class="c" style="left:652px;top:584.5px;width:139px;height:39px;justify-content:flex-end;align-items:center;text-align:right;padding:0px 2px 0px 2px;white-space:pre;"><span style="letter-spacing:-0.368px;margin-right:0.368px;">1,000,000.00</span></div>
<div class="c" style="left:792px;top:584.5px;width:282px;height:39px;justify-content:flex-start;align-items:center;text-align:left;padding:0px 2px 0px 1.2px;white-space:pre;"><span style="letter-spacing:0.074px;">Өдөр тутам хэрэглэгдэх багаж хэрэгсэл</span></div>
<div class="b" style="left:89px;top:623px;width:24px;height:21px;border-left:1px solid #000;border-top:1px solid #000;border-right:1px solid #000;border-bottom:1px solid #000;"></div>
<div class="b" style="left:112px;top:623px;width:261px;height:21px;border-left:1px solid #000;border-top:1px solid #000;border-right:1px solid #000;border-bottom:1px solid #000;"></div>
<div class="b" style="left:372px;top:623px;width:96px;height:21px;border-left:1px solid #000;border-top:1px solid #000;border-right:1px solid #000;border-bottom:1px solid #000;"></div>
<div class="b" style="left:467px;top:623px;width:101px;height:21px;border-left:1px solid #000;border-top:1px solid #000;border-right:1px solid #000;border-bottom:1px solid #000;"></div>
<div class="b" style="left:567px;top:623px;width:85px;height:21px;border-left:1px solid #000;border-top:1px solid #000;border-right:1px solid #000;border-bottom:1px solid #000;"></div>
<div class="b" style="left:651px;top:623px;width:141px;height:21px;border-left:1px solid #000;border-top:1px solid #000;border-right:1px solid #000;border-bottom:1px solid #000;"></div>
<div class="b" style="left:791px;top:623px;width:284px;height:21px;border-left:1px solid #000;border-top:1px solid #000;border-right:1px solid #000;border-bottom:1px solid #000;"></div>
<div class="c" style="left:113px;top:624.5px;width:259px;height:19px;justify-content:flex-start;align-items:center;text-align:left;padding:0px 2px 0px 1.5px;white-space:pre;"><span style="letter-spacing:0.080px;">Ургамал хамгааллын бодис, бордоо</span></div>
<div class="c" style="left:373px;top:624.5px;width:94px;height:19px;justify-content:center;align-items:center;text-align:center;padding:0px 2px 0px 2px;white-space:pre;"><span style="letter-spacing:-0.337px;margin-right:0.168px;margin-left:-0.168px;">ширхэг</span></div>
<div class="c" style="left:468px;top:624.5px;width:99px;height:19px;justify-content:flex-end;align-items:center;text-align:right;padding:0px 6.3px 0px 2px;white-space:pre;"><span style="letter-spacing:-0.364px;margin-right:0.364px;">2,500,000</span></div>
<div class="c" style="left:568px;top:624.5px;width:83px;height:19px;justify-content:flex-end;align-items:center;text-align:right;padding:0px 6.3px 0px 2px;white-space:pre;"><span style="letter-spacing:-0.335px;margin-right:0.335px;">1</span></div>
<div class="c" style="left:652px;top:624.5px;width:139px;height:19px;justify-content:flex-end;align-items:center;text-align:right;padding:0px 2px 0px 2px;white-space:pre;"><span style="letter-spacing:-0.368px;margin-right:0.368px;">2,500,000.00</span></div>
<div class="c" style="left:792px;top:624.5px;width:282px;height:19px;justify-content:flex-start;align-items:center;text-align:left;padding:0px 2px 0px 1.2px;white-space:pre;"><span style="letter-spacing:-0.094px;">Хадлангийн талбайн хоргүйжэлт</span></div>
<div class="b" style="left:89px;top:643px;width:24px;height:41px;border-left:1px solid #000;border-top:1px solid #000;border-right:1px solid #000;border-bottom:1px solid #000;"></div>
<div class="b" style="left:112px;top:643px;width:261px;height:41px;border-left:1px solid #000;border-top:1px solid #000;border-right:1px solid #000;border-bottom:1px solid #000;"></div>
<div class="b" style="left:372px;top:643px;width:96px;height:41px;border-left:1px solid #000;border-top:1px solid #000;border-right:1px solid #000;border-bottom:1px solid #000;"></div>
<div class="b" style="left:467px;top:643px;width:101px;height:41px;border-left:1px solid #000;border-top:1px solid #000;border-right:1px solid #000;border-bottom:1px solid #000;"></div>
<div class="b" style="left:567px;top:643px;width:85px;height:41px;border-left:1px solid #000;border-top:1px solid #000;border-right:1px solid #000;border-bottom:1px solid #000;"></div>
<div class="b" style="left:651px;top:643px;width:141px;height:41px;border-left:1px solid #000;border-top:1px solid #000;border-right:1px solid #000;border-bottom:1px solid #000;"></div>
<div class="b" style="left:791px;top:643px;width:284px;height:41px;border-left:1px solid #000;border-top:1px solid #000;border-right:1px solid #000;border-bottom:1px solid #000;"></div>
<div class="c" style="left:90px;top:644.5px;width:22px;height:39px;justify-content:center;align-items:center;text-align:center;padding:0px 2px 0px 2px;white-space:pre;"><span style="letter-spacing:-0.335px;margin-right:0.167px;margin-left:-0.167px;">9</span></div>
<div class="c" style="left:113px;top:644.5px;width:259px;height:39px;justify-content:flex-start;align-items:center;text-align:left;padding:0px 2px 0px 1.5px;white-space:pre;"><span style="letter-spacing:0.001px;">Хадлагнгийн талбайн 5 га газар</span></div>
<div class="c" style="left:373px;top:644.5px;width:94px;height:39px;justify-content:center;align-items:center;text-align:center;padding:0px 2px 0px 2px;white-space:pre;"><span style="letter-spacing:-0.337px;margin-right:0.168px;margin-left:-0.168px;">ширхэг</span></div>
<div class="c" style="left:468px;top:644.5px;width:99px;height:39px;justify-content:flex-end;align-items:center;text-align:right;padding:0px 6.3px 0px 2px;white-space:pre;"><span style="letter-spacing:-0.362px;margin-right:0.362px;">80,000,000</span></div>
<div class="c" style="left:568px;top:644.5px;width:83px;height:39px;justify-content:flex-end;align-items:center;text-align:right;padding:0px 6.3px 0px 2px;white-space:pre;"><span style="letter-spacing:-0.335px;margin-right:0.335px;">1</span></div>
<div class="c" style="left:652px;top:644.5px;width:139px;height:39px;justify-content:flex-end;align-items:center;text-align:right;padding:0px 2px 0px 2px;white-space:pre;"><span style="letter-spacing:-0.366px;margin-right:0.366px;">80,000,000.00</span></div>
<div class="c" style="left:792px;top:644.5px;width:282px;height:39px;justify-content:flex-start;align-items:center;text-align:left;padding:0px 2px 0px 1.2px;white-space:pre;"><span style="letter-spacing:-0.044px;">Ус, цахилгааны зарцуулалтыг 70% хэмнэнэ</span></div>
<div class="b" style="left:89px;top:723px;width:24px;height:21px;border-left:1px solid #000;border-top:1px solid #000;border-right:1px solid #000;border-bottom:1px solid #000;"></div>
<div class="b" style="left:112px;top:723px;width:261px;height:21px;border-left:1px solid #000;border-top:1px solid #000;border-right:1px solid #000;border-bottom:1px solid #000;"></div>
<div class="b" style="left:372px;top:723px;width:96px;height:21px;border-left:1px solid #000;border-top:1px solid #000;border-right:1px solid #000;border-bottom:1px solid #000;"></div>
<div class="b" style="left:467px;top:723px;width:101px;height:21px;border-left:1px solid #000;border-top:1px solid #000;border-right:1px solid #000;border-bottom:1px solid #000;"></div>
<div class="b" style="left:567px;top:723px;width:85px;height:21px;border-left:1px solid #000;border-top:1px solid #000;border-right:1px solid #000;border-bottom:1px solid #000;"></div>
<div class="b" style="left:651px;top:723px;width:141px;height:21px;border-left:1px solid #000;border-top:1px solid #000;border-right:1px solid #000;border-bottom:1px solid #000;"></div>
<div class="b" style="left:791px;top:723px;width:284px;height:21px;border-left:1px solid #000;border-top:1px solid #000;border-right:1px solid #000;border-bottom:1px solid #000;"></div>
<div class="c" style="left:90px;top:724.5px;width:22px;height:19px;justify-content:center;align-items:center;text-align:center;padding:0px 2px 0px 2px;white-space:pre;"><span style="letter-spacing:-0.335px;margin-right:0.167px;margin-left:-0.167px;">13</span></div>
<div class="c" style="left:113px;top:724.5px;width:259px;height:19px;justify-content:flex-start;align-items:center;text-align:left;padding:0px 2px 0px 1.5px;white-space:pre;"><span style="letter-spacing:0.145px;">Хашаалалт</span></div>
<div class="c" style="left:373px;top:724.5px;width:94px;height:19px;justify-content:center;align-items:center;text-align:center;padding:0px 2px 0px 2px;white-space:pre;"><span style="letter-spacing:0.247px;margin-right:-0.124px;margin-left:0.124px;">1 удаа</span></div>
<div class="c" style="left:568px;top:724.5px;width:83px;height:19px;justify-content:flex-end;align-items:center;text-align:right;padding:0px 6.3px 0px 2px;white-space:pre;"><span style="letter-spacing:-0.335px;margin-right:0.335px;">1</span></div>
<div class="c" style="left:652px;top:724.5px;width:139px;height:19px;justify-content:flex-end;align-items:center;text-align:right;padding:0px 2px 0px 2px;white-space:pre;"><span style="letter-spacing:-0.366px;margin-right:0.366px;">19,200,000.00</span></div>
<div class="c" style="left:792px;top:724.5px;width:282px;height:19px;justify-content:flex-start;align-items:center;text-align:left;padding:0px 2px 0px 1.2px;white-space:pre;"><span style="letter-spacing:-0.043px;">1190м тор болон 600 шон авах</span></div>
<div class="b" style="left:89px;top:743px;width:24px;height:41px;border-left:1px solid #000;border-top:1px solid #000;border-right:1px solid #000;border-bottom:1px solid #000;"></div>
<div class="b" style="left:112px;top:743px;width:261px;height:41px;border-left:1px solid #000;border-top:1px solid #000;border-right:1px solid #000;border-bottom:1px solid #000;"></div>
<div class="b" style="left:372px;top:743px;width:96px;height:41px;border-left:1px solid #000;border-top:1px solid #000;border-right:1px solid #000;border-bottom:1px solid #000;"></div>
<div class="b" style="left:467px;top:743px;width:101px;height:41px;border-left:1px solid #000;border-top:1px solid #000;border-right:1px solid #000;border-bottom:1px solid #000;"></div>
<div class="b" style="left:567px;top:743px;width:85px;height:41px;border-left:1px solid #000;border-top:1px solid #000;border-right:1px solid #000;border-bottom:1px solid #000;"></div>
<div class="b" style="left:651px;top:743px;width:141px;height:41px;border-left:1px solid #000;border-top:1px solid #000;border-right:1px solid #000;border-bottom:1px solid #000;"></div>
<div class="b" style="left:791px;top:743px;width:284px;height:41px;border-left:1px solid #000;border-top:1px solid #000;border-right:1px solid #000;border-bottom:1px solid #000;"></div>
<div class="c" style="left:90px;top:744.5px;width:22px;height:39px;justify-content:center;align-items:center;text-align:center;padding:0px 2px 0px 2px;white-space:pre;"><span style="letter-spacing:-0.335px;margin-right:0.167px;margin-left:-0.167px;">14</span></div>
<div class="c" style="left:113px;top:744.5px;width:259px;height:39px;justify-content:flex-start;align-items:center;text-align:left;padding:0px 2px 0px 1.5px;white-space:pre;"><span><span style="letter-spacing:-0.014px;">Хөрс боловсруулалт, тариалалтын үйл</span><span style="letter-spacing:0.045px;">ажиллагаа</span></span></div>
<div class="c" style="left:468px;top:744.5px;width:99px;height:39px;justify-content:flex-end;align-items:center;text-align:right;padding:0px 6.3px 0px 2px;white-space:pre;"><span style="letter-spacing:-0.362px;margin-right:0.362px;">5,000</span></div>
<div class="c" style="left:568px;top:744.5px;width:83px;height:39px;justify-content:flex-end;align-items:center;text-align:right;padding:0px 6.3px 0px 2px;white-space:pre;"><span style="letter-spacing:-0.362px;margin-right:0.362px;">1,000</span></div>
<div class="c" style="left:652px;top:744.5px;width:139px;height:39px;justify-content:flex-end;align-items:center;text-align:right;padding:0px 2px 0px 2px;white-space:pre;"><span style="letter-spacing:-0.368px;margin-right:0.368px;">5,000,000.00</span></div>
<div class="c" style="left:792px;top:744.5px;width:282px;height:39px;justify-content:flex-start;align-items:center;text-align:left;padding:0px 2px 0px 1.2px;white-space:pre;"><span style="letter-spacing:-0.062px;">80-120 см өндөртэй шар хуйс</span></div>
<div class="b" style="left:89px;top:783px;width:24px;height:21px;border-left:1px solid #000;border-top:1px solid #000;border-right:1px solid #000;border-bottom:1px solid #000;"></div>
<div class="b" style="left:112px;top:783px;width:261px;height:21px;border-left:1px solid #000;border-top:1px solid #000;border-right:1px solid #000;border-bottom:1px solid #000;"></div>
<div class="b" style="left:372px;top:783px;width:96px;height:21px;border-left:1px solid #000;border-top:1px solid #000;border-right:1px solid #000;border-bottom:1px solid #000;"></div>
<div class="b" style="left:467px;top:783px;width:101px;height:21px;border-left:1px solid #000;border-top:1px solid #000;border-right:1px solid #000;border-bottom:1px solid #000;"></div>
<div class="b" style="left:567px;top:783px;width:85px;height:21px;border-left:1px solid #000;border-top:1px solid #000;border-right:1px solid #000;border-bottom:1px solid #000;"></div>
<div class="b" style="left:651px;top:783px;width:141px;height:21px;border-left:1px solid #000;border-top:1px solid #000;border-right:1px solid #000;border-bottom:1px solid #000;"></div>
<div class="b" style="left:791px;top:783px;width:284px;height:21px;border-left:1px solid #000;border-top:1px solid #000;border-right:1px solid #000;border-bottom:1px solid #000;"></div>
<div class="c" style="left:113px;top:784.5px;width:259px;height:19px;justify-content:flex-start;align-items:center;text-align:left;padding:0px 2px 0px 1.5px;white-space:pre;"><span style="letter-spacing:-0.057px;">Худаг</span></div>
<div class="c" style="left:373px;top:784.5px;width:94px;height:19px;justify-content:center;align-items:center;text-align:center;padding:0px 2px 0px 2px;white-space:pre;"><span style="letter-spacing:0.247px;margin-right:-0.124px;margin-left:0.124px;">1 удаа</span></div>
<div class="c" style="left:468px;top:784.5px;width:99px;height:19px;justify-content:flex-end;align-items:center;text-align:right;padding:0px 6.3px 0px 2px;white-space:pre;"><span style="letter-spacing:-0.354px;margin-right:0.354px;">300,000</span></div>
<div class="c" style="left:568px;top:784.5px;width:83px;height:19px;justify-content:flex-end;align-items:center;text-align:right;padding:0px 6.3px 0px 2px;white-space:pre;"><span style="letter-spacing:-0.335px;margin-right:0.335px;">70</span></div>
<div class="c" style="left:652px;top:784.5px;width:139px;height:19px;justify-content:flex-end;align-items:center;text-align:right;padding:0px 2px 0px 2px;white-space:pre;"><span style="letter-spacing:-0.366px;margin-right:0.366px;">21,000,000.00</span></div>
<div class="c" style="left:792px;top:784.5px;width:282px;height:19px;justify-content:flex-start;align-items:center;text-align:left;padding:0px 2px 0px 1.2px;white-space:pre;"><span style="letter-spacing:0.127px;">70м-н гүн</span></div>
<div class="b" style="left:89px;top:803px;width:24px;height:21px;border-left:1px solid #000;border-top:1px solid #000;border-right:1px solid #000;border-bottom:1px solid #000;"></div>
<div class="b" style="left:112px;top:803px;width:261px;height:21px;border-left:1px solid #000;border-top:1px solid #000;border-right:1px solid #000;border-bottom:1px solid #000;"></div>
<div class="b" style="left:372px;top:803px;width:96px;height:21px;border-left:1px solid #000;border-top:1px solid #000;border-right:1px solid #000;border-bottom:1px solid #000;"></div>
<div class="b" style="left:467px;top:803px;width:101px;height:21px;border-left:1px solid #000;border-top:1px solid #000;border-right:1px solid #000;border-bottom:1px solid #000;"></div>
<div class="b" style="left:567px;top:803px;width:85px;height:21px;border-left:1px solid #000;border-top:1px solid #000;border-right:1px solid #000;border-bottom:1px solid #000;"></div>
<div class="b" style="left:651px;top:803px;width:141px;height:21px;border-left:1px solid #000;border-top:1px solid #000;border-right:1px solid #000;border-bottom:1px solid #000;"></div>
<div class="b" style="left:791px;top:803px;width:284px;height:21px;border-left:1px solid #000;border-top:1px solid #000;border-right:1px solid #000;border-bottom:1px solid #000;"></div>
<div class="c" style="left:113px;top:804.5px;width:259px;height:19px;justify-content:flex-start;align-items:center;text-align:left;padding:0px 2px 0px 1.5px;white-space:pre;"><span style="letter-spacing:0.112px;">Усалгааны  шийльдэл</span></div>
<div class="c" style="left:373px;top:804.5px;width:94px;height:19px;justify-content:center;align-items:center;text-align:center;padding:0px 2px 0px 2px;white-space:pre;"><span style="letter-spacing:-0.335px;margin-right:0.167px;margin-left:-0.167px;">1</span></div>
<div class="c" style="left:468px;top:804.5px;width:99px;height:19px;justify-content:flex-end;align-items:center;text-align:right;padding:0px 6.3px 0px 2px;white-space:pre;"><span style="letter-spacing:-0.362px;margin-right:0.362px;">40,000,000</span></div>
<div class="c" style="left:568px;top:804.5px;width:83px;height:19px;justify-content:flex-end;align-items:center;text-align:right;padding:0px 6.3px 0px 2px;white-space:pre;"><span style="letter-spacing:-0.335px;margin-right:0.335px;">1</span></div>
<div class="c" style="left:652px;top:804.5px;width:139px;height:19px;justify-content:flex-end;align-items:center;text-align:right;padding:0px 2px 0px 2px;white-space:pre;"><span style="letter-spacing:-0.366px;margin-right:0.366px;">40,000,000.00</span></div>
<div class="b" style="left:89px;top:823px;width:24px;height:21px;border-left:1px solid #000;border-top:1px solid #000;border-right:1px solid #000;border-bottom:1px solid #000;"></div>
<div class="b" style="left:112px;top:823px;width:261px;height:21px;border-left:1px solid #000;border-top:1px solid #000;border-right:1px solid #000;border-bottom:1px solid #000;"></div>
<div class="b" style="left:372px;top:823px;width:96px;height:21px;border-left:1px solid #000;border-top:1px solid #000;border-right:1px solid #000;border-bottom:1px solid #000;"></div>
<div class="b" style="left:467px;top:823px;width:101px;height:21px;border-left:1px solid #000;border-top:1px solid #000;border-right:1px solid #000;border-bottom:1px solid #000;"></div>
<div class="b" style="left:567px;top:823px;width:85px;height:21px;border-left:1px solid #000;border-top:1px solid #000;border-right:1px solid #000;border-bottom:1px solid #000;"></div>
<div class="b" style="left:651px;top:823px;width:141px;height:21px;border-left:1px solid #000;border-top:1px solid #000;border-right:1px solid #000;border-bottom:1px solid #000;"></div>
<div class="b" style="left:791px;top:823px;width:284px;height:21px;border-left:1px solid #000;border-top:1px solid #000;border-right:1px solid #000;border-bottom:1px solid #000;"></div>
<div class="c" style="left:90px;top:824.5px;width:22px;height:19px;justify-content:center;align-items:center;text-align:center;padding:0px 2px 0px 2px;white-space:pre;"><span style="letter-spacing:-0.335px;margin-right:0.167px;margin-left:-0.167px;">15</span></div>
<div class="c" style="left:113px;top:824.5px;width:259px;height:19px;justify-content:flex-start;align-items:center;text-align:left;padding:0px 2px 0px 1.5px;white-space:pre;"><span style="letter-spacing:-0.054px;">Байрлах гэр</span></div>
<div class="c" style="left:373px;top:824.5px;width:94px;height:19px;justify-content:center;align-items:center;text-align:center;padding:0px 2px 0px 2px;white-space:pre;"><span style="letter-spacing:-0.335px;margin-right:0.167px;margin-left:-0.167px;">2</span></div>
<div class="c" style="left:468px;top:824.5px;width:99px;height:19px;justify-content:flex-end;align-items:center;text-align:right;padding:0px 6.3px 0px 2px;white-space:pre;"><span style="letter-spacing:-0.364px;margin-right:0.364px;">1,500,000</span></div>
<div class="c" style="left:652px;top:824.5px;width:139px;height:19px;justify-content:flex-end;align-items:center;text-align:right;padding:0px 2px 0px 2px;white-space:pre;"><span style="letter-spacing:-0.368px;margin-right:0.368px;">3,000,000.00</span></div>
<div class="c" style="left:792px;top:824.5px;width:282px;height:19px;justify-content:flex-start;align-items:center;text-align:left;padding:0px 2px 0px 1.2px;white-space:pre;"><span style="letter-spacing:-0.003px;">Хадлангийн талбайд  байрлах гэр</span></div>
<div class="b" style="left:89px;top:683px;width:24px;height:21px;border-left:1px solid #000;border-top:1px solid #000;border-right:1px solid #000;border-bottom:1px solid #000;"></div>
<div class="b" style="left:112px;top:683px;width:261px;height:21px;border-left:1px solid #000;border-top:1px solid #000;border-right:1px solid #000;border-bottom:1px solid #000;"></div>
<div class="b" style="left:372px;top:683px;width:196px;height:21px;border-left:1px solid #000;border-top:1px solid #000;border-right:1px solid #000;border-bottom:1px solid #000;"></div>
<div class="b" style="left:567px;top:683px;width:85px;height:21px;border-left:1px solid #000;border-top:1px solid #000;border-right:1px solid #000;border-bottom:1px solid #000;"></div>
<div class="b" style="left:651px;top:683px;width:141px;height:21px;border-left:1px solid #000;border-top:1px solid #000;border-right:1px solid #000;border-bottom:1px solid #000;"></div>
<div class="b" style="left:791px;top:683px;width:284px;height:21px;border-left:1px solid #000;border-top:1px solid #000;border-right:1px solid #000;border-bottom:1px solid #000;"></div>
<div class="c" style="left:90px;top:684.5px;width:22px;height:19px;justify-content:center;align-items:center;text-align:center;padding:0px 2px 0px 2px;white-space:pre;"><span style="letter-spacing:-0.335px;margin-right:0.167px;margin-left:-0.167px;">10</span></div>
<div class="c" style="left:113px;top:684.5px;width:259px;height:19px;justify-content:flex-start;align-items:center;text-align:left;padding:0px 2px 0px 2px;font-weight:bold;white-space:pre;"><span style="letter-spacing:0.241px;">Дүн</span></div>
<div class="c" style="left:568px;top:684.5px;width:83px;height:19px;justify-content:flex-end;align-items:center;text-align:right;padding:0px 6.3px 0px 2px;white-space:pre;"><span style="letter-spacing:-0.335px;margin-right:0.335px;">1</span></div>
<div class="c" style="left:652px;top:684.5px;width:139px;height:19px;justify-content:flex-end;align-items:center;text-align:right;padding:0px 2px 0px 2px;font-weight:bold;white-space:pre;"><span style="letter-spacing:0.594px;margin-right:-0.594px;">178,500,000.00</span></div>
<div class="b" style="left:89px;top:703px;width:24px;height:21px;border-left:1px solid #000;border-top:1px solid #000;border-right:1px solid #000;border-bottom:1px solid #000;"></div>
<div class="b" style="left:112px;top:703px;width:963px;height:21px;border-left:1px solid #000;border-top:1px solid #000;border-bottom:1px solid #000;"></div>
<div class="c" style="left:113px;top:704.5px;width:961px;height:19px;justify-content:center;align-items:center;text-align:center;padding:0px 2px 0px 2px;font-weight:bold;white-space:pre;"><span style="letter-spacing:0.237px;margin-right:-0.118px;margin-left:0.118px;">Зээлийн эх үүсвэрээр дэд бүтэц шийдэх</span></div>
<div class="b" style="left:89px;top:843px;width:24px;height:21px;border-left:1px solid #000;border-top:1px solid #000;border-right:1px solid #000;border-bottom:1px solid #000;"></div>
<div class="b" style="left:112px;top:843px;width:261px;height:21px;border-left:1px solid #000;border-top:1px solid #000;border-right:1px solid #000;border-bottom:1px solid #000;"></div>
<div class="b" style="left:372px;top:843px;width:96px;height:21px;border-left:1px solid #000;border-top:1px solid #000;border-right:1px solid #000;border-bottom:1px solid #000;"></div>
<div class="b" style="left:467px;top:843px;width:101px;height:21px;border-left:1px solid #000;border-top:1px solid #000;border-right:1px solid #000;border-bottom:1px solid #000;"></div>
<div class="b" style="left:567px;top:843px;width:85px;height:21px;border-left:1px solid #000;border-top:1px solid #000;border-right:1px solid #000;border-bottom:1px solid #000;"></div>
<div class="b" style="left:651px;top:843px;width:141px;height:21px;border-left:1px solid #000;border-top:1px solid #000;border-right:1px solid #000;border-bottom:1px solid #000;"></div>
<div class="b" style="left:791px;top:843px;width:284px;height:21px;border-left:1px solid #000;border-top:1px solid #000;border-right:1px solid #000;border-bottom:1px solid #000;"></div>
<div class="c" style="left:113px;top:844.5px;width:259px;height:19px;justify-content:flex-start;align-items:center;text-align:left;padding:0px 2px 0px 2px;font-weight:bold;white-space:pre;"><span style="letter-spacing:0.241px;">Дүн</span></div>
<div class="c" style="left:652px;top:844.5px;width:139px;height:19px;justify-content:flex-end;align-items:center;text-align:right;padding:0px 2px 0px 2px;font-weight:bold;white-space:pre;"><span style="letter-spacing:0.588px;margin-right:-0.588px;">88,200,000.00</span></div>
<div class="b" style="left:89px;top:863px;width:24px;height:21px;border-left:1px solid #000;border-top:1px solid #000;border-right:1px solid #000;border-bottom:1px solid #000;"></div>
<div class="b" style="left:112px;top:863px;width:261px;height:21px;border-left:1px solid #000;border-top:1px solid #000;border-right:1px solid #000;border-bottom:1px solid #000;"></div>
<div class="b" style="left:372px;top:863px;width:96px;height:21px;border-left:1px solid #000;border-top:1px solid #000;border-right:1px solid #000;border-bottom:1px solid #000;"></div>
<div class="b" style="left:467px;top:863px;width:101px;height:21px;border-left:1px solid #000;border-top:1px solid #000;border-right:1px solid #000;border-bottom:1px solid #000;"></div>
<div class="b" style="left:567px;top:863px;width:85px;height:21px;border-left:1px solid #000;border-top:1px solid #000;border-right:1px solid #000;border-bottom:1px solid #000;"></div>
<div class="b" style="left:651px;top:863px;width:141px;height:21px;border-left:1px solid #000;border-top:1px solid #000;border-right:1px solid #000;border-bottom:1px solid #000;"></div>
<div class="b" style="left:791px;top:863px;width:284px;height:21px;border-left:1px solid #000;border-top:1px solid #000;border-right:1px solid #000;border-bottom:1px solid #000;"></div>
<div class="c" style="left:113px;top:864.5px;width:259px;height:19px;justify-content:flex-start;align-items:center;text-align:left;padding:0px 2px 0px 2px;font-weight:bold;white-space:pre;"><span style="letter-spacing:0.551px;">Нийт дүн</span></div>
<div class="c" style="left:652px;top:864.5px;width:139px;height:19px;justify-content:flex-end;align-items:center;text-align:right;padding:0px 2px 0px 2px;font-weight:bold;white-space:pre;"><span style="letter-spacing:0.594px;margin-right:-0.594px;">266,700,000.00</span></div>
<div class="b" style="left:89px;top:883px;width:24px;height:21px;border-left:1px solid #000;border-top:1px solid #000;border-right:1px solid #000;border-bottom:1px solid #000;"></div>
<div class="c" style="left:1109px;top:482.5px;width:63px;height:61px;justify-content:flex-end;align-items:center;text-align:right;padding:0px 2.4px 0px 2px;white-space:pre;"><span style="letter-spacing:-0.335px;margin-right:0.335px;">2600</span></div>
<div class="c" style="left:1173px;top:482.5px;width:63px;height:61px;justify-content:flex-end;align-items:center;text-align:right;padding:0px 2.2px 0px 2px;white-space:pre;"><span style="letter-spacing:-0.335px;margin-right:0.335px;">5200</span></div>
<div class="c" style="left:1075px;top:544.5px;width:33px;height:39px;justify-content:center;align-items:center;text-align:center;padding:0px 2px 0px 2px;white-space:pre;"><span style="letter-spacing:0.765px;margin-right:-0.383px;margin-left:0.383px;">###</span></div>
<svg style="left:1075px;top:544px;" width="7" height="7" viewBox="0 0 7 7"><path d="M0 0 H6.5 L0 6.5 Z" fill="#1e7a3c"/></svg>
</div>
</body></html>
